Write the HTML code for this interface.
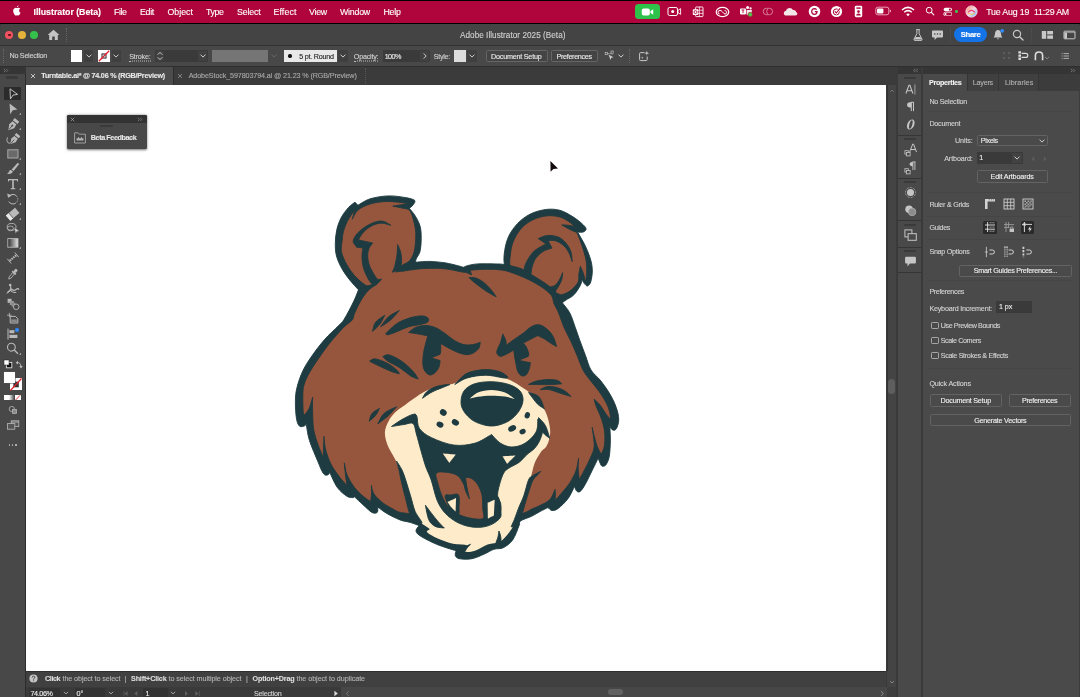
<!DOCTYPE html>
<html lang="en"><head><meta charset="utf-8"><title>Adobe Illustrator 2025 (Beta)</title>
<style>
html,body{margin:0;padding:0;background:#3a3a3a;}
body{width:1080px;height:697px;overflow:hidden;position:relative;font-family:"Liberation Sans",sans-serif;}
#r{position:absolute;left:0;top:0;width:1080px;height:697px;overflow:hidden;will-change:transform;}
#r div,#r svg,#r span{position:absolute;display:block;}
#r span{white-space:nowrap;line-height:1;transform:translateY(-50%);-webkit-text-stroke:0.12px currentColor;}
</style></head><body><div id="r">
<div style="left:0px;top:0px;width:1080px;height:24px;background:#000;"></div>
<div style="left:0px;top:1px;width:1080px;height:22px;background:#b0043c;"></div>
<div style="left:0px;top:23.7px;width:1080px;height:674px;background:#3a3a3a;border-radius:2.5px 2.5px 0 0;"></div>
<div style="left:0px;top:23.7px;width:1080px;height:21.3px;background:#444444;border-radius:2.5px 2.5px 0 0;"></div>
<div style="left:0px;top:45px;width:1080px;height:0.8px;background:#333;"></div>
<div style="left:0px;top:45.8px;width:1080px;height:20.4px;background:#484848;"></div>
<div style="left:0px;top:66.2px;width:1080px;height:0.8px;background:#2f2f2f;"></div>
<div style="left:0px;top:67px;width:1080px;height:17.5px;background:#3b3b3b;"></div>
<div style="left:5.4px;top:31.1px;width:7.8px;height:7.8px;background:#f0525f;border-radius:50%;"></div>
<div style="left:7.9px;top:33.6px;width:2.8px;height:2.8px;background:#5a1218;border-radius:50%;"></div>
<div style="left:17.9px;top:31.1px;width:7.8px;height:7.8px;background:#e5b23a;border-radius:50%;"></div>
<div style="left:30.4px;top:31.1px;width:7.8px;height:7.8px;background:#35c14b;border-radius:50%;"></div>
<svg style="left:47px;top:29px" width="13" height="12" viewBox="0 0 13 12"><path d="M6.5 0.8 L0.6 6 H2.2 V11 H5.2 V7.6 H7.8 V11 H10.8 V6 H12.4 Z" fill="#c4c4c4"/></svg>
<div style="left:66px;top:28px;width:0.6px;height:14px;background:transparent;border-left:0.6px dotted #666;"></div>
<div style="left:2.5px;top:49px;width:0.6px;height:14px;background:transparent;border-left:0.6px dotted #6a6a6a;"></div>
<div style="left:70.7px;top:50px;width:11.8px;height:11.8px;background:#fff;"></div>
<div style="left:84px;top:50px;width:9.3px;height:11.8px;background:#3f3f3f;border-radius:1px;"></div>
<svg style="left:84.6px;top:52px" width="8" height="8" viewBox="-4 -4 8 8"><path d="M-2.2 -1.1 L0 1.1 L2.2 -1.1" fill="none" stroke="#ddd" stroke-width="0.9" stroke-linecap="round" stroke-linejoin="round"/></svg>
<div style="left:98px;top:50px;width:11.8px;height:11.8px;background:#fff;"></div>
<svg style="left:98px;top:50px" width="12" height="12" viewBox="0 0 12 12"><rect x="4" y="4" width="4" height="4" fill="none" stroke="#333" stroke-width="1.1"/><path d="M0.8 11.2 L11.2 0.8" stroke="#e0202c" stroke-width="1.3"/></svg>
<div style="left:111.5px;top:50px;width:9.3px;height:11.8px;background:#3f3f3f;border-radius:1px;"></div>
<svg style="left:112.1px;top:52px" width="8" height="8" viewBox="-4 -4 8 8"><path d="M-2.2 -1.1 L0 1.1 L2.2 -1.1" fill="none" stroke="#ddd" stroke-width="0.9" stroke-linecap="round" stroke-linejoin="round"/></svg>
<div style="left:154.7px;top:49.7px;width:10.6px;height:12px;background:#414141;border:0.5px solid #3a3a3a;box-sizing:border-box;border-radius:1px;"></div>
<svg style="left:155px;top:50px" width="10" height="12" viewBox="0 0 10 12"><path d="M3 4.4 L5 2.4 L7 4.4 M3 7.6 L5 9.6 L7 7.6" fill="none" stroke="#ddd" stroke-width="0.9" stroke-linecap="round" stroke-linejoin="round"/></svg>
<div style="left:165.3px;top:49.7px;width:31.7px;height:12px;background:#3a3a3a;"></div>
<div style="left:197.4px;top:49.7px;width:10.8px;height:12px;background:#414141;border:0.5px solid #3a3a3a;box-sizing:border-box;border-radius:1px;"></div>
<svg style="left:198.6px;top:52px" width="8" height="8" viewBox="-4 -4 8 8"><path d="M-2.2 -1.1 L0 1.1 L2.2 -1.1" fill="none" stroke="#ddd" stroke-width="0.9" stroke-linecap="round" stroke-linejoin="round"/></svg>
<div style="left:212px;top:49.5px;width:56.3px;height:12.5px;background:#757575;"></div>
<svg style="left:270px;top:52px" width="8" height="8" viewBox="-4 -4 8 8"><path d="M-2.2 -1.1 L0 1.1 L2.2 -1.1" fill="none" stroke="#6a6a6a" stroke-width="0.9" stroke-linecap="round" stroke-linejoin="round"/></svg>
<div style="left:283.7px;top:50px;width:53.8px;height:11.8px;background:#e8e8e8;"></div>
<div style="left:288.3px;top:54.3px;width:3.4px;height:3.4px;background:#111;border-radius:50%;"></div>
<div style="left:338px;top:50px;width:10.3px;height:11.8px;background:#3f3f3f;border-radius:1px;"></div>
<svg style="left:339.2px;top:52px" width="8" height="8" viewBox="-4 -4 8 8"><path d="M-2.2 -1.1 L0 1.1 L2.2 -1.1" fill="none" stroke="#ddd" stroke-width="0.9" stroke-linecap="round" stroke-linejoin="round"/></svg>
<div style="left:383px;top:49.7px;width:35.8px;height:12px;background:#3a3a3a;"></div>
<div style="left:419.2px;top:49.7px;width:10.8px;height:12px;background:#414141;border:0.5px solid #3a3a3a;box-sizing:border-box;border-radius:1px;"></div>
<svg style="left:420.5px;top:52px" width="8" height="8" viewBox="-4 -4 8 8"><path d="M-1 -2.2 L1.2 0 L-1 2.2" fill="none" stroke="#ddd" stroke-width="0.9" stroke-linecap="round" stroke-linejoin="round"/></svg>
<div style="left:454.3px;top:50px;width:11.5px;height:11.8px;background:#dcdcdc;"></div>
<div style="left:466.5px;top:50px;width:10px;height:11.8px;background:#3f3f3f;border-radius:1px;"></div>
<svg style="left:467.7px;top:52px" width="8" height="8" viewBox="-4 -4 8 8"><path d="M-2.2 -1.1 L0 1.1 L2.2 -1.1" fill="none" stroke="#ddd" stroke-width="0.9" stroke-linecap="round" stroke-linejoin="round"/></svg>
<div style="left:485.5px;top:50.3px;width:62px;height:11.6px;background:#444;border:0.6px solid #656565;border-radius:1.5px;box-sizing:border-box;"></div>
<div style="left:550.8px;top:50.3px;width:47.2px;height:11.6px;background:#444;border:0.6px solid #656565;border-radius:1.5px;box-sizing:border-box;"></div>
<svg style="left:604px;top:50px" width="12" height="12" viewBox="0 0 12 12"><rect x="1.2" y="2.5" width="2.2" height="2.2" fill="none" stroke="#bbb" stroke-width="0.7"/><rect x="7" y="1" width="2.2" height="2.2" fill="none" stroke="#bbb" stroke-width="0.7"/><path d="M3.4 3.6 H7 M8.1 3.2 V5" stroke="#bbb" stroke-width="0.6"/><path d="M4.5 4.5 L9.5 7.2 L7.3 7.8 L6.5 10 Z" fill="#ccc"/></svg>
<svg style="left:616.8px;top:52px" width="8" height="8" viewBox="-4 -4 8 8"><path d="M-2.2 -1.1 L0 1.1 L2.2 -1.1" fill="none" stroke="#ddd" stroke-width="0.9" stroke-linecap="round" stroke-linejoin="round"/></svg>
<div style="left:629.3px;top:49px;width:0.6px;height:14px;background:transparent;border-left:0.6px dotted #666;"></div>
<svg style="left:637px;top:49.5px" width="13" height="13" viewBox="0 0 13 13"><path d="M7.5 2.6 H3.6 Q2.6 2.6 2.6 3.6 V9.6 Q2.6 10.6 3.6 10.6 H9.2 Q10.2 10.6 10.2 9.6 V6.6" fill="none" stroke="#c8c8c8" stroke-width="1"/><path d="M9.8 0.8 L10.4 2.6 L12.2 3.2 L10.4 3.8 L9.8 5.6 L9.2 3.8 L7.4 3.2 L9.2 2.6 Z" fill="#c8c8c8"/><path d="M5.2 6.6 l0.35 0.9 l0.9 0.35 l-0.9 0.35 l-0.35 0.9 l-0.35 -0.9 l-0.9 -0.35 l0.9 -0.35 Z" fill="#c8c8c8"/></svg>
<svg style="left:1002px;top:51px" width="10" height="10" viewBox="0 0 10 10"><g fill="#5c5c5c"><rect x="1" y="1" width="2.2" height="2.2"/><rect x="6" y="1" width="2.2" height="2.2"/><rect x="1" y="6" width="2.2" height="2.2"/><rect x="6" y="6" width="2.2" height="2.2"/></g></svg>
<svg style="left:1017px;top:50px" width="13" height="12" viewBox="0 0 13 12"><path d="M2.7 1.2 V10.8" stroke="#ddd" stroke-width="2.6" stroke-dasharray="2.4 0.8"/><path d="M4.6 3.4 H8.8 Q10.8 3.4 10.8 5.4 Q10.8 7.4 8.8 7.4 H4.6" fill="none" stroke="#ddd" stroke-width="1.1"/></svg>
<svg style="left:1033px;top:50px" width="12" height="12" viewBox="0 0 12 12"><path d="M2.4 10.2 V5.6 Q2.4 2 6 2 Q9.6 2 9.6 5.6 V10.2" fill="none" stroke="#ddd" stroke-width="1.6"/></svg>
<svg style="left:1042.5px;top:53.5px" width="8" height="8" viewBox="-4 -4 8 8"><path d="M-1.7 -0.85 L0 0.85 L1.7 -0.85" fill="none" stroke="#aaa" stroke-width="0.7" stroke-linecap="round" stroke-linejoin="round"/></svg>
<svg style="left:1061px;top:52px" width="8.8" height="8" viewBox="0 0 11 10"><g stroke="#c8c8c8" stroke-width="1"><path d="M3.2 2 H10 M3.2 5 H10 M3.2 8 H10"/><path d="M0.8 2 H2 M0.8 5 H2 M0.8 8 H2"/></g></svg>
<svg style="left:911px;top:28px" width="14" height="14" viewBox="0 0 14 14"><path d="M5.2 1.6 H8.8 M5.9 1.6 V5.6 L3 11.2 Q2.6 12.4 3.8 12.4 H10.2 Q11.4 12.4 11 11.2 L8.1 5.6 V1.6" fill="none" stroke="#c8c8c8" stroke-width="1"/><path d="M4.6 9 H9.4 L10.6 11.6 H3.4 Z" fill="#c8c8c8"/></svg>
<svg style="left:931px;top:28.5px" width="13" height="13" viewBox="0 0 13 13"><path d="M1.8 1.6 H11.2 Q12 1.6 12 2.4 V7.6 Q12 8.4 11.2 8.4 H6 L3.6 11 V8.4 H1.8 Q1 8.4 1 7.6 V2.4 Q1 1.6 1.8 1.6 Z" fill="#c8c8c8"/><g fill="#444"><circle cx="3.8" cy="5" r="0.8"/><circle cx="6.5" cy="5" r="0.8"/><circle cx="9.2" cy="5" r="0.8"/></g></svg>
<div style="left:950.3px;top:28px;width:0.6px;height:14px;background:transparent;border-left:0.6px dotted #525252;"></div>
<div style="left:954.4px;top:26.7px;width:32.8px;height:15.5px;background:#1473e6;border-radius:8px;"></div>
<svg style="left:991px;top:28px" width="14" height="14" viewBox="0 0 14 14"><path d="M7 2 Q4.2 2.4 4 5.6 Q3.9 8.2 2.6 9.6 H11.4 Q10.1 8.2 10 5.6 Q9.8 2.4 7 2 Z" fill="#c8c8c8"/><path d="M5.8 10.4 Q7 12.2 8.2 10.4 Z" fill="#c8c8c8"/><circle cx="11.2" cy="2.8" r="1.9" fill="#2f8bff"/></svg>
<svg style="left:1011px;top:28px" width="14" height="14" viewBox="0 0 14 14"><circle cx="6" cy="6" r="3.6" fill="none" stroke="#c8c8c8" stroke-width="1.2"/><path d="M8.7 8.7 L12 12" stroke="#c8c8c8" stroke-width="1.4" stroke-linecap="round"/></svg>
<div style="left:1030.6px;top:28px;width:0.6px;height:14px;background:transparent;border-left:0.6px dotted #525252;"></div>
<svg style="left:1041px;top:29.5px" width="13" height="10" viewBox="0 0 13 10"><g fill="#c8c8c8"><rect x="0.8" y="1" width="4.4" height="7.8"/><rect x="6.2" y="1" width="5.8" height="3.4"/><rect x="6.2" y="5.4" width="5.8" height="3.4"/></g></svg>
<svg style="left:1062.5px;top:29.5px" width="13" height="10" viewBox="0 0 13 10"><rect x="1" y="1.2" width="11" height="7.6" rx="0.6" fill="none" stroke="#c8c8c8" stroke-width="1"/><rect x="1.4" y="2.6" width="2.6" height="6" fill="#c8c8c8"/><path d="M1 2.6 H12" stroke="#c8c8c8" stroke-width="0.6"/></svg>
<svg style="left:12.3px;top:5.1px" width="9.4" height="11.1" viewBox="0 0 11 13"><path d="M7.4 3.1 Q8.6 3 9.6 4.2 Q8.2 5.2 8.3 6.7 Q8.4 8.4 10 9.1 Q9.5 10.6 8.5 11.8 Q7.8 12.6 7 12.3 Q6 11.8 5.2 12.2 Q4.2 12.7 3.5 12 Q1.2 9.6 1.3 6.8 Q1.5 3.6 4.2 3.3 Q5.3 3.5 5.9 3.6 Q6.5 3.4 7.4 3.1 Z M5.6 3 Q5.5 1.2 7.6 0.4 Q7.8 2.3 5.6 3 Z" fill="#fff"/></svg>
<div style="left:635px;top:3.8px;width:25px;height:15px;background:#2fc24b;border-radius:3.5px;"></div>
<svg style="left:641px;top:6.5px" width="13" height="10" viewBox="0 0 13 10"><rect x="0.8" y="1.4" width="8" height="7.2" rx="1.8" fill="#fff"/><path d="M9.4 4.2 L12.2 2.2 V7.8 L9.4 5.8 Z" fill="#fff"/></svg>
<svg style="left:667px;top:6px" width="15" height="11" viewBox="0 0 15 11"><rect x="1" y="1.5" width="9.5" height="8" rx="1.6" fill="none" stroke="#fff" stroke-width="1"/><circle cx="5.7" cy="5.5" r="1.5" fill="#fff"/><path d="M11 4.4 L13.6 2.6 V8.4 L11 6.6 Z" fill="none" stroke="#fff" stroke-width="0.9"/></svg>
<svg style="left:692px;top:5.5px" width="12" height="12" viewBox="0 0 12 12"><rect x="3.6" y="1" width="7.4" height="9.6" rx="0.8" fill="none" stroke="#fff" stroke-width="0.9"/><path d="M3.6 4.2 H11 M7.4 1 V10.6 M3.6 7.4 H11" stroke="#fff" stroke-width="0.7"/><rect x="0.8" y="3.2" width="5.4" height="5.8" rx="0.8" fill="#fff"/><circle cx="3.5" cy="6.1" r="1.5" fill="none" stroke="#b0043c" stroke-width="0.9"/></svg>
<svg style="left:714.5px;top:5.5px" width="15" height="12" viewBox="0 0 15 12"><ellipse cx="7.5" cy="6" rx="6.3" ry="4.7" fill="none" stroke="#fff" stroke-width="1.2"/><path d="M4.6 8 Q3 7.8 3 6.2 Q3.2 4.4 5 4.4 Q6.2 4.4 7.2 5.6 L9 7.6 Q10 8.4 11 7.8 Q12 7 11.6 5.8 Q11 4.4 9.6 4.6" fill="none" stroke="#fff" stroke-width="1"/></svg>
<svg style="left:739px;top:5px" width="14" height="13" viewBox="0 0 14 13"><rect x="1" y="3.4" width="6" height="6" rx="0.8" fill="#fff"/><path d="M2.6 5 H5.4 M4 5 V8.2" stroke="#b0043c" stroke-width="0.9"/><circle cx="8.6" cy="2.6" r="1.5" fill="#fff"/><circle cx="11.6" cy="3.4" r="1.1" fill="#fff"/><path d="M7.6 5 H12.8 V8 Q12.6 10.4 10 10.4 Q8.4 10.4 7.6 9.4 Z" fill="#fff" opacity="0.9"/><circle cx="11.2" cy="9.6" r="2.3" fill="#4fc34a" stroke="#b0043c" stroke-width="0.6"/></svg>
<svg style="left:761.5px;top:7px" width="12" height="9" viewBox="0 0 12 9"><rect x="1.2" y="1.3" width="9.4" height="6.4" rx="3.2" fill="none" stroke="#dc8aa2" stroke-width="0.9"/><path d="M5.6 2 Q3.6 4.5 5.6 7" fill="none" stroke="#dc8aa2" stroke-width="0.9"/></svg>
<svg style="left:783px;top:6px" width="15" height="11" viewBox="0 0 15 11"><path d="M3.6 9.6 Q0.8 9.6 0.8 7.2 Q0.8 5.2 3 4.8 Q3.8 2 6.8 2 Q9 2 10 4 Q11.2 3.6 12.4 4.6 Q13 5.2 13 6 Q14.4 6.4 14.4 7.8 Q14.4 9.6 12.4 9.6 Z" fill="#f3e6ea"/></svg>
<svg style="left:808px;top:5px" width="13" height="13" viewBox="0 0 13 13"><circle cx="6.5" cy="6.5" r="5.8" fill="#fff"/><path d="M8.6 4.6 Q7.8 3.6 6.4 3.6 Q3.8 3.7 3.7 6.5 Q3.8 9.3 6.4 9.4 Q8.8 9.3 9 6.7 H6.8" fill="none" stroke="#b0043c" stroke-width="1.2"/></svg>
<svg style="left:830px;top:5px" width="13" height="13" viewBox="0 0 13 13"><circle cx="6.5" cy="6.5" r="5.6" fill="#fff"/><circle cx="6.3" cy="6.9" r="3" fill="none" stroke="#b0043c" stroke-width="1"/><path d="M4.8 6.4 L6.3 8 L10.2 3.2" fill="none" stroke="#fff" stroke-width="2.4"/><path d="M4.8 6.4 L6.3 8 L10 3.4" fill="none" stroke="#b0043c" stroke-width="1.1"/></svg>
<svg style="left:853.5px;top:5px" width="9" height="13" viewBox="0 0 9 13"><rect x="0.8" y="0.8" width="7.4" height="11.4" rx="1.4" fill="#fff"/><rect x="2.4" y="2.4" width="4.2" height="1.4" fill="#b0043c"/><circle cx="4.5" cy="6.6" r="1.3" fill="#b0043c"/><path d="M2.2 10.4 Q2.2 8.4 4.5 8.4 Q6.8 8.4 6.8 10.4 Z" fill="#b0043c"/></svg>
<svg style="left:875px;top:6px" width="17" height="10" viewBox="0 0 17 10"><rect x="0.8" y="1.2" width="13" height="7.6" rx="2" fill="none" stroke="#efb3c4" stroke-width="0.9"/><rect x="2" y="2.4" width="6.4" height="5.2" rx="1" fill="#fff"/><path d="M14.8 3.6 Q16 3.8 16 5 Q16 6.2 14.8 6.4 Z" fill="#efb3c4"/></svg>
<svg style="left:901px;top:5.5px" width="14" height="11" viewBox="0 0 14 11"><g fill="none" stroke="#fff" stroke-width="1.5" stroke-linecap="butt"><path d="M1 4 Q7 -1.2 13 4"/><path d="M3.2 6.3 Q7 3 10.8 6.3"/></g><path d="M5.2 8.3 Q7 6.8 8.8 8.3 L7 10.2 Z" fill="#fff"/></svg>
<svg style="left:924.5px;top:6.2px" width="10" height="10" viewBox="0 0 10 10"><circle cx="4.2" cy="4.2" r="2.9" fill="none" stroke="#fff" stroke-width="1"/><path d="M6.4 6.4 L8.8 8.8" stroke="#fff" stroke-width="1.1" stroke-linecap="round"/></svg>
<svg style="left:942.6px;top:6.6px" width="9.6" height="9.6" viewBox="0 0 12 12"><rect x="0.8" y="1" width="10.4" height="4.4" rx="2.2" fill="#fff"/><circle cx="8.6" cy="3.2" r="1.4" fill="#b0043c"/><rect x="0.8" y="6.6" width="10.4" height="4.4" rx="2.2" fill="none" stroke="#fff" stroke-width="0.9"/><circle cx="3.2" cy="8.8" r="1.3" fill="#fff"/></svg>
<div style="left:955.1px;top:9.9px;width:2.8px;height:2.8px;background:#35d052;border-radius:50%;"></div>
<svg style="left:964.5px;top:5px" width="13" height="13" viewBox="0 0 13 13"><defs><linearGradient id="sg" x1="0" y1="0" x2="1" y2="1"><stop offset="0" stop-color="#ff8a5c"/><stop offset="0.5" stop-color="#f4d9e6"/><stop offset="1" stop-color="#59b7ff"/></linearGradient></defs><circle cx="6.5" cy="6.5" r="5.6" fill="url(#sg)" stroke="#f4e3e8" stroke-width="0.9"/><path d="M3 7.4 Q6.5 3.4 10 7.4" fill="none" stroke="#e8467a" stroke-width="1.1"/><path d="M3.4 8.4 Q6.5 10.6 9.6 8.4" fill="none" stroke="#f8c24a" stroke-width="1"/></svg>
<div style="left:25.8px;top:67px;width:147.5px;height:17.5px;background:#4c4c4c;"></div>
<div style="left:173.3px;top:67px;width:0.7px;height:17.5px;background:#2e2e2e;"></div>
<div style="left:364.5px;top:68px;width:0.6px;height:16px;background:transparent;border-left:0.6px dotted #555;"></div>
<svg style="left:30.3px;top:72.6px" width="6" height="6" viewBox="0 0 6 6"><path d="M1 1 L5 5 M5 1 L1 5" stroke="#e0e0e0" stroke-width="0.8"/></svg>
<svg style="left:177.3px;top:72.6px" width="6" height="6" viewBox="0 0 6 6"><path d="M1 1 L5 5 M5 1 L1 5" stroke="#a0a0a0" stroke-width="0.7"/></svg>
<div style="left:25.8px;top:84.5px;width:860.7px;height:586.7px;background:#fff;"></div>
<div style="left:0px;top:66.8px;width:25.8px;height:7px;background:#353535;"></div>
<div style="left:0px;top:73.8px;width:25.2px;height:623.2px;background:#484848;"></div>
<div style="left:25.2px;top:73.8px;width:0.7px;height:623.2px;background:#2c2c2c;"></div>
<svg style="left:3px;top:67.5px" width="6" height="5" viewBox="0 0 6 5"><path d="M0.8 0.8 L2.4 2.5 L0.8 4.2 M3.2 0.8 L4.8 2.5 L3.2 4.2" fill="none" stroke="#9a9a9a" stroke-width="0.6"/></svg>
<div style="left:6.3px;top:76.2px;width:12px;height:2.4px;background:#3a3a3a;border-radius:1px;"></div>
<div style="left:4.2px;top:87px;width:16.6px;height:13.4px;background:#2b2b2b;border-radius:1px;"></div>
<svg style="left:4.5px;top:86px" width="16" height="16" viewBox="-8 -8 16 16"><path d="M-3 -5.2 L4.6 0.4 L0 1.1 L-2.6 5 Z" fill="none" stroke="#c0c0c0" stroke-width="1" stroke-linejoin="miter"/></svg>
<svg style="left:4.5px;top:101.3px" width="16" height="16" viewBox="-8 -8 16 16"><path d="M-3.4 -5.6 L4.4 0.6 L-0.2 1.2 L-2.8 5.2 Z" fill="#bababa"/><path d="M8.3 3.5 V5.7 H6.1 Z" fill="#b8b8b8"/></svg>
<svg style="left:4.5px;top:116.2px" width="16" height="16" viewBox="-8 -8 16 16"><g transform="translate(0.4 0.2) rotate(40) scale(1.22)"><path d="M-2 -1.4 H2 L2.6 2.2 L0 6.4 L-2.6 2.2 Z" fill="#bababa"/><rect x="-2.4" y="-4.6" width="4.8" height="2.4" fill="#bababa"/><path d="M0 1 V5.4" stroke="#484848" stroke-width="0.7"/><circle cx="0" cy="1.4" r="0.8" fill="#484848"/></g><path d="M8.3 3.5 V5.7 H6.1 Z" fill="#b8b8b8"/></svg>
<svg style="left:4.5px;top:130.8px" width="16" height="16" viewBox="-8 -8 16 16"><g transform="translate(2 -0.4) rotate(40) scale(1.18)"><path d="M-1.9 -1.4 H1.9 L2.4 2 L0 6 L-2.4 2 Z" fill="#bababa"/><rect x="-2.2" y="-4.4" width="4.4" height="2.3" fill="#bababa"/><path d="M0 1 V5" stroke="#484848" stroke-width="0.7"/></g><path d="M-5.6 -1.6 Q-7 1.6 -5.2 3.6 Q-3.6 5.2 -2.4 3.2" fill="none" stroke="#bababa" stroke-width="0.9"/></svg>
<svg style="left:4.5px;top:145.6px" width="16" height="16" viewBox="-8 -8 16 16"><rect x="-5.2" y="-4.2" width="10.2" height="8.2" fill="#6a6a6a" stroke="#a8a8a8" stroke-width="1"/><path d="M8.3 3.5 V5.7 H6.1 Z" fill="#b8b8b8"/></svg>
<svg style="left:4.5px;top:160.6px" width="16" height="16" viewBox="-8 -8 16 16"><path d="M4.8 -6.2 L6.2 -5 L0.6 2 L-1.4 0.4 Z" fill="#bababa"/><path d="M-2 1 L0 2.8 Q-1.4 5.6 -6 5 Q-4.2 3.8 -4 2.4 Q-3.4 0.8 -2 1 Z" fill="#bababa"/><path d="M8.3 3.5 V5.7 H6.1 Z" fill="#b8b8b8"/></svg>
<svg style="left:4.5px;top:175.7px" width="16" height="16" viewBox="-8 -8 16 16"><path d="M-5 -5 H5 V-2.6 H4.2 L3.8 -3.8 H0.8 V4 L2.4 4.4 V5.2 H-2.4 V4.4 L-0.8 4 V-3.8 H-3.8 L-4.2 -2.6 H-5 Z" fill="#bababa"/><path d="M8.3 3.5 V5.7 H6.1 Z" fill="#b8b8b8"/></svg>
<svg style="left:4.5px;top:190.6px" width="16" height="16" viewBox="-8 -8 16 16"><path d="M-3.6 -3 A4.8 4.8 0 1 1 -4.2 2.6" fill="none" stroke="#bababa" stroke-width="1" stroke-dasharray="9 1.2 1.2 1.2 1.2 1.2 20"/><path d="M-5.8 -5.6 L-5 -1.2 L-1.2 -3.4 Z" fill="#bababa"/><path d="M8.3 3.5 V5.7 H6.1 Z" fill="#b8b8b8"/></svg>
<svg style="left:4.5px;top:205.8px" width="16" height="16" viewBox="-8 -8 16 16"><g transform="rotate(-40) scale(1.15)"><rect x="-5.6" y="-3" width="10.4" height="6" fill="#bababa"/><rect x="-5.6" y="-3" width="3.4" height="6" fill="#e8e8e8"/><path d="M-2.2 -3 V3" stroke="#484848" stroke-width="0.6"/></g><path d="M8.3 3.5 V5.7 H6.1 Z" fill="#b8b8b8"/></svg>
<svg style="left:4.5px;top:220.3px" width="16" height="16" viewBox="-8 -8 16 16"><ellipse cx="-1.4" cy="-1.2" rx="4.4" ry="3.4" fill="none" stroke="#bababa" stroke-width="0.9"/><ellipse cx="-2.6" cy="0.4" rx="3" ry="2.4" fill="none" stroke="#bababa" stroke-width="0.8"/><path d="M1.4 -0.4 L6.4 3 L3.8 3.4 L2.6 5.8 Z" fill="#d8d8d8" stroke="#484848" stroke-width="0.4"/></svg>
<svg style="left:4.5px;top:235.2px" width="16" height="16" viewBox="-8 -8 16 16"><defs><linearGradient id="gg" x1="0" y1="0" x2="1" y2="0"><stop offset="0" stop-color="#2a2a2a"/><stop offset="1" stop-color="#e6e6e6"/></linearGradient></defs><rect x="-5.2" y="-4.4" width="10.2" height="8.6" fill="url(#gg)" stroke="#bababa" stroke-width="0.9"/><path d="M8.3 3.5 V5.7 H6.1 Z" fill="#b8b8b8"/></svg>
<svg style="left:4.5px;top:250.3px" width="16" height="16" viewBox="-8 -8 16 16"><g transform="rotate(-40)"><path d="M-4.2 0 H4.2" stroke="#bababa" stroke-width="2.2" stroke-dasharray="1.5 0.8"/><path d="M-4.9 -3 V3 M4.9 -3 V3" stroke="#bababa" stroke-width="0.9"/></g></svg>
<svg style="left:4.5px;top:265.6px" width="16" height="16" viewBox="-8 -8 16 16"><g transform="rotate(40)"><path d="M-1.1 -1 H1.1 V4.6 L0 6.6 L-1.1 4.6 Z" fill="none" stroke="#bababa" stroke-width="0.8"/><rect x="-2.4" y="-2.4" width="4.8" height="1.6" fill="#bababa"/><rect x="-1.5" y="-6" width="3" height="3.8" rx="1.2" fill="#bababa"/></g></svg>
<svg style="left:4.5px;top:280.6px" width="16" height="16" viewBox="-8 -8 16 16"><path d="M-5.6 3.6 Q-3 2.2 -2.2 -0.6 Q-1.8 -3 -3.6 -4.4 M-2.2 -0.6 Q0.4 2.6 3 0.6 Q5 -1.2 6 0.6 M-2.6 1 Q-0.4 4.4 3.2 3.2" fill="none" stroke="#bababa" stroke-width="1.2"/><circle cx="-2.8" cy="-4" r="1.3" fill="#bababa"/><path d="M-6.4 4.4 L-2.2 1.4" stroke="#bababa" stroke-width="0.9"/></svg>
<svg style="left:4.5px;top:295.6px" width="16" height="16" viewBox="-8 -8 16 16"><path d="M-5.4 -5.2 H-1.4 V-1.2 H-5.4 Z" fill="#bababa"/><path d="M-3.2 -3 H0.8 V1 H-3.2 Z" fill="#9a9a9a"/><circle cx="0.4" cy="0.6" r="2.4" fill="#8a8a8a"/><circle cx="3.2" cy="2.8" r="2.8" fill="#484848" stroke="#bababa" stroke-width="0.9"/></svg>
<svg style="left:4.5px;top:310.6px" width="16" height="16" viewBox="-8 -8 16 16"><path d="M-3.6 -6.2 V-1.8 M-6 -3.8 H-1.4" stroke="#bababa" stroke-width="0.8"/><path d="M-2.8 -2.6 H2.4 L4.8 -0.4 V4 H-2.8 Z" fill="none" stroke="#bababa" stroke-width="1"/><path d="M-1.8 0.4 H3.8 V3 H-1.8 Z" fill="#8a8a8a"/></svg>
<svg style="left:4.5px;top:325.6px" width="16" height="16" viewBox="-8 -8 16 16"><path d="M-5 -5.4 V5.6" stroke="#bababa" stroke-width="1"/><rect x="-3.6" y="-3.8" width="5" height="3" fill="#bababa"/><rect x="-3.6" y="0.8" width="8" height="3.2" fill="#bababa"/></svg>
<div style="left:14.8px;top:327.6px;width:4.6px;height:4.6px;background:#2f8bff;border-radius:50%;"></div>
<svg style="left:4.5px;top:340.8px" width="16" height="16" viewBox="-8 -8 16 16"><circle cx="-1.6" cy="-1.8" r="3.9" fill="none" stroke="#bababa" stroke-width="1.1"/><path d="M1.2 1 L5 4.8" stroke="#bababa" stroke-width="1.3"/><path d="M8.3 3.5 V5.7 H6.1 Z" fill="#b8b8b8"/></svg>
<svg style="left:2.6px;top:359.4px" width="10" height="10" viewBox="0 0 10 10"><rect x="3.4" y="3.4" width="5.4" height="5.4" fill="#111" stroke="#ddd" stroke-width="0.9"/><rect x="1" y="1" width="5" height="5" fill="#fff" stroke="#222" stroke-width="0.5"/></svg>
<svg style="left:15px;top:360px" width="9" height="9" viewBox="0 0 9 9"><path d="M2 2.6 Q5.6 2.2 6 6.6" fill="none" stroke="#bababa" stroke-width="1"/><path d="M0.6 2.8 L3 0.8 V4.6 Z M4.2 6 H7.8 L6 8.4 Z" fill="#bababa"/></svg>
<div style="left:10px;top:378px;width:11.5px;height:12.2px;background:#fff;"></div>
<svg style="left:10px;top:378px" width="12" height="13" viewBox="0 0 11.5 12.2"><rect x="3.2" y="3.4" width="5.2" height="5.4" fill="#333"/><path d="M0.4 11.8 L11.1 0.4" stroke="#e0202c" stroke-width="1.2"/></svg>
<div style="left:3.8px;top:372px;width:11.4px;height:11.3px;background:#fff;box-shadow:0 0 0 0.5px #555;"></div>
<div style="left:4.3px;top:394.5px;width:4.6px;height:5.6px;background:#fff;"></div>
<div style="left:9.4px;top:394.5px;width:4.4px;height:5.6px;background:linear-gradient(90deg,#fff,#555);"></div>
<div style="left:15.4px;top:394.5px;width:5.4px;height:5.6px;background:#fff;"></div>
<svg style="left:15.4px;top:394.5px" width="5.4" height="5.6" viewBox="0 0 5.4 5.6"><path d="M0.2 5.4 L5.2 0.2" stroke="#e0202c" stroke-width="0.9"/></svg>
<svg style="left:4.5px;top:401.6px" width="16" height="16" viewBox="-8 -8 16 16"><circle cx="-1.2" cy="-1" r="2.6" fill="none" stroke="#bababa" stroke-width="0.8"/><rect x="-0.6" y="-0.4" width="4.2" height="3.8" fill="#8a8a8a" stroke="#bababa" stroke-width="0.7"/></svg>
<svg style="left:4.5px;top:416.6px" width="16" height="16" viewBox="-8 -8 16 16"><rect x="-1.8" y="-4.2" width="7.6" height="5.8" fill="#555" stroke="#bababa" stroke-width="0.8"/><path d="M-1.8 -3 H5.8" stroke="#bababa" stroke-width="0.9"/><rect x="-5.6" y="-1.4" width="7.4" height="5.6" fill="#555" stroke="#bababa" stroke-width="0.8"/></svg>
<div style="left:8.6px;top:444px;width:1.7px;height:1.7px;background:#bababa;border-radius:50%;"></div>
<div style="left:11.799999999999999px;top:444px;width:1.7px;height:1.7px;background:#bababa;border-radius:50%;"></div>
<div style="left:15.0px;top:444px;width:1.7px;height:1.7px;background:#bababa;border-radius:50%;"></div>
<div style="left:67px;top:114.5px;width:80px;height:34.2px;background:#484848;border-radius:1.5px;box-shadow:0 0.5px 2.5px rgba(0,0,0,0.55);"></div>
<div style="left:67px;top:114.5px;width:80px;height:8.3px;background:#333;border-radius:1.5px 1.5px 0 0;"></div>
<svg style="left:70px;top:116.7px" width="5" height="5" viewBox="0 0 5 5"><path d="M0.7 0.7 L4.3 4.3 M4.3 0.7 L0.7 4.3" stroke="#bbb" stroke-width="0.6"/></svg>
<svg style="left:136.5px;top:116.7px" width="6" height="5" viewBox="0 0 6 5"><path d="M0.8 0.8 L2.4 2.5 L0.8 4.2 M3.2 0.8 L4.8 2.5 L3.2 4.2" fill="none" stroke="#9a9a9a" stroke-width="0.6"/></svg>
<div style="left:100px;top:125px;width:12.8px;height:2.4px;background:#3a3a3a;border-radius:1px;"></div>
<svg style="left:73.5px;top:131.6px" width="12" height="12" viewBox="0 0 12 12"><path d="M0.6 0.8 H4.2 L5.2 2.2 H11.4 V11 H0.6 Z" fill="none" stroke="#b4b4b4" stroke-width="0.8"/><path d="M2.6 8.6 V6.2 H4.2 V5 H5 V6.2 H7 V5 H7.8 V6.2 H9.4 V8.6 Z" fill="#b4b4b4"/></svg>
<div style="left:886.5px;top:84.5px;width:9.6px;height:586.7px;background:#444;"></div>
<div style="left:886.5px;top:84.5px;width:1.5px;height:602.5px;background:#343434;"></div>
<svg style="left:887.5px;top:86.5px" width="8" height="8" viewBox="-4 -4 8 8"><path d="M-1.8 0.8 L0 -1 L1.8 0.8" fill="none" stroke="#888" stroke-width="0.7"/></svg>
<div style="left:887.8px;top:379px;width:7.2px;height:14.8px;background:#5e5e5e;border-radius:3.6px;"></div>
<div style="left:886.5px;top:671.2px;width:9.6px;height:15.8px;background:#444;"></div>
<svg style="left:887.5px;top:677.5px" width="8" height="8" viewBox="-4 -4 8 8"><path d="M-1.8 -0.8 L0 1 L1.8 -0.8" fill="none" stroke="#aaa" stroke-width="0.7"/></svg>
<div style="left:898.3px;top:66.8px;width:23.2px;height:7px;background:#353535;"></div>
<svg style="left:912.5px;top:68px" width="6" height="5" viewBox="0 0 6 5"><path d="M2.4 0.8 L0.8 2.5 L2.4 4.2 M4.8 0.8 L3.2 2.5 L4.8 4.2" fill="none" stroke="#9a9a9a" stroke-width="0.6"/></svg>
<div style="left:898.3px;top:73.8px;width:23.2px;height:623.2px;background:#494949;"></div>
<div style="left:898.3px;top:134.6px;width:23.2px;height:0.8px;background:#353535;"></div>
<div style="left:898.3px;top:177.5px;width:23.2px;height:0.8px;background:#353535;"></div>
<div style="left:898.3px;top:220.4px;width:23.2px;height:0.8px;background:#353535;"></div>
<div style="left:898.3px;top:246.5px;width:23.2px;height:0.8px;background:#353535;"></div>
<div style="left:898.3px;top:271.8px;width:23.2px;height:0.8px;background:#353535;"></div>
<div style="left:904px;top:76.8px;width:11.6px;height:2.2px;background:#3a3a3a;border-radius:1px;"></div>
<div style="left:904px;top:137.6px;width:11.6px;height:2.2px;background:#3a3a3a;border-radius:1px;"></div>
<div style="left:904px;top:180.6px;width:11.6px;height:2.2px;background:#3a3a3a;border-radius:1px;"></div>
<div style="left:904px;top:223.6px;width:11.6px;height:2.2px;background:#3a3a3a;border-radius:1px;"></div>
<div style="left:904px;top:249.6px;width:11.6px;height:2.2px;background:#3a3a3a;border-radius:1px;"></div>
<svg style="left:902px;top:80.5px" width="17" height="17" viewBox="-8.5 -8.5 17 17"><path d="M-4.6 4 L-1.6 -4.2 H-0.6 L2.4 4 M-3.4 1.2 H1.2" fill="none" stroke="#c6c6c6" stroke-width="1.05"/><path d="M4.4 -5 V5" stroke="#c6c6c6" stroke-width="0.7"/></svg>
<svg style="left:902px;top:98px" width="17" height="17" viewBox="-8.5 -8.5 17 17"><path d="M0.4 -4.2 H3.6 M0.8 -4.2 V4.6 M3 -4.2 V4.6" stroke="#c6c6c6" stroke-width="1"/><path d="M0.8 -4.2 H-0.6 Q-3.4 -4 -3.4 -1.6 Q-3.4 0.8 -0.6 1 H0.8 Z" fill="#c6c6c6"/></svg>
<svg style="left:902px;top:115.5px" width="17" height="17" viewBox="-8.5 -8.5 17 17"><g transform="skewX(-14)"><path fill-rule="evenodd" fill="#c6c6c6" d="M0.3 -5 C2.4 -5 3.9 -2.8 3.9 0 C3.9 2.8 2.4 5 0.3 5 C-1.8 5 -3.3 2.8 -3.3 0 C-3.3 -2.8 -1.8 -5 0.3 -5 Z M0.3 -4.3 C-0.7 -4.3 -1.2 -2.4 -1.2 0 C-1.2 2.4 -0.7 4.3 0.3 4.3 C1.3 4.3 1.8 2.4 1.8 0 C1.8 -2.4 1.3 -4.3 0.3 -4.3 Z"/></g></svg>
<svg style="left:902px;top:141px" width="17" height="17" viewBox="-8.5 -8.5 17 17"><path d="M-0.8 2.6 L2.2 -5.4 H3 L6 2.6 M0.4 0 H4.8" fill="none" stroke="#c6c6c6" stroke-width="1"/><rect x="-5.6" y="1.2" width="3.4" height="3.4" fill="none" stroke="#c6c6c6" stroke-width="0.8"/><rect x="-4" y="3" width="3.6" height="3.4" fill="#494949" stroke="#c6c6c6" stroke-width="0.8"/></svg>
<svg style="left:902px;top:158.8px" width="17" height="17" viewBox="-8.5 -8.5 17 17"><path d="M2 -5.6 H5 M2.4 -5.6 V2.6 M4.4 -5.6 V2.6" stroke="#c6c6c6" stroke-width="0.9"/><path d="M2.4 -5.6 H1.4 Q-1 -5.4 -1 -3.4 Q-1 -1.4 1.4 -1.2 H2.4 Z" fill="#c6c6c6"/><rect x="-5.6" y="1.2" width="3.4" height="3.4" fill="none" stroke="#c6c6c6" stroke-width="0.8"/><rect x="-4" y="3" width="3.6" height="3.4" fill="#494949" stroke="#c6c6c6" stroke-width="0.8"/></svg>
<svg style="left:902px;top:183.9px" width="17" height="17" viewBox="-8.5 -8.5 17 17"><circle r="3.5" fill="#c6c6c6"/><circle r="5" fill="none" stroke="#c6c6c6" stroke-width="0.9" stroke-dasharray="0.7 0.9"/></svg>
<svg style="left:902px;top:201.6px" width="17" height="17" viewBox="-8.5 -8.5 17 17"><circle cx="-1.4" cy="-1.2" r="3.8" fill="#c6c6c6"/><circle cx="1.6" cy="1.4" r="3.8" fill="#8c8c8c" stroke="#c6c6c6" stroke-width="0.5"/></svg>
<svg style="left:902px;top:226.8px" width="17" height="17" viewBox="-8.5 -8.5 17 17"><rect x="-5.6" y="-5.6" width="7" height="7" fill="none" stroke="#c6c6c6" stroke-width="1"/><rect x="-2.4" y="-1.8" width="8.2" height="6.6" fill="#494949" stroke="#c6c6c6" stroke-width="1"/></svg>
<svg style="left:902px;top:252.8px" width="17" height="17" viewBox="-8.5 -8.5 17 17"><path d="M-4.4 -4.8 H4.4 Q5.4 -4.8 5.4 -3.8 V1 Q5.4 2 4.4 2 H-0.6 L-3 5 V2 H-4.4 Q-5.4 2 -5.4 1 V-3.8 Q-5.4 -4.8 -4.4 -4.8 Z" fill="#c6c6c6"/></svg>
<div style="left:923.3px;top:66.8px;width:156.7px;height:7px;background:#353535;"></div>
<svg style="left:1069.5px;top:68px" width="6" height="5" viewBox="0 0 6 5"><path d="M0.8 0.8 L2.4 2.5 L0.8 4.2 M3.2 0.8 L4.8 2.5 L3.2 4.2" fill="none" stroke="#9a9a9a" stroke-width="0.6"/></svg>
<div style="left:923.3px;top:73.8px;width:156.7px;height:623.2px;background:#4a4a4a;"></div>
<div style="left:1078.7px;top:73.8px;width:1.3px;height:623.2px;background:#3d3d3d;"></div>
<div style="left:923.3px;top:73.8px;width:156.7px;height:17px;background:#3c3c3c;"></div>
<div style="left:923.3px;top:73.8px;width:43.5px;height:17px;background:#4a4a4a;"></div>
<div style="left:966.8px;top:73.8px;width:32px;height:17px;background:#404040;border-left:0.6px solid #353535;border-right:0.6px solid #353535;box-sizing:border-box;"></div>
<div style="left:998.8px;top:73.8px;width:39.8px;height:17px;background:#404040;border-right:0.6px solid #353535;box-sizing:border-box;"></div>
<div style="left:927px;top:111.3px;width:145px;height:0.6px;background:#454545;"></div>
<div style="left:927px;top:192px;width:145px;height:0.6px;background:#454545;"></div>
<div style="left:927px;top:215.7px;width:145px;height:0.6px;background:#454545;"></div>
<div style="left:927px;top:239px;width:145px;height:0.6px;background:#454545;"></div>
<div style="left:927px;top:280.4px;width:145px;height:0.6px;background:#454545;"></div>
<div style="left:927px;top:368.3px;width:145px;height:0.6px;background:#454545;"></div>
<div style="left:976.5px;top:134.6px;width:71.5px;height:11.6px;background:#4a4a4a;border:0.6px solid #636363;border-radius:1.5px;box-sizing:border-box;"></div>
<svg style="left:1038.3px;top:136.6px" width="8" height="8" viewBox="-4 -4 8 8"><path d="M-2.2 -1.1 L0 1.1 L2.2 -1.1" fill="none" stroke="#ddd" stroke-width="0.9" stroke-linecap="round" stroke-linejoin="round"/></svg>
<div style="left:976.5px;top:152.4px;width:34.7px;height:11.7px;background:#3a3a3a;"></div>
<div style="left:1011.4px;top:152.4px;width:11.3px;height:11.7px;background:#424242;border:0.5px solid #3a3a3a;box-sizing:border-box;border-radius:1px;"></div>
<svg style="left:1013px;top:154.4px" width="8" height="8" viewBox="-4 -4 8 8"><path d="M-2.2 -1.1 L0 1.1 L2.2 -1.1" fill="none" stroke="#ddd" stroke-width="0.9" stroke-linecap="round" stroke-linejoin="round"/></svg>
<svg style="left:1029px;top:154.5px" width="20" height="8" viewBox="0 0 20 8"><path d="M5.2 1.6 V6.4 L2.6 4 Z M14.8 1.6 V6.4 L17.4 4 Z" fill="#5e5e5e"/></svg>
<div style="left:976.5px;top:170.4px;width:71.5px;height:12.4px;background:#4a4a4a;border:0.6px solid #636363;border-radius:1.5px;box-sizing:border-box;"></div>
<svg style="left:984px;top:198px" width="12" height="12" viewBox="0 0 12 12"><path d="M1 11 V1 H11 V3.6 H3.6 V11 Z" fill="#d2d2d2"/><path d="M5.4 1 V2.4 M7.4 1 V2.4 M9.4 1 V2.4" stroke="#4a4a4a" stroke-width="0.5"/></svg>
<svg style="left:1002.7px;top:198px" width="12" height="12" viewBox="0 0 12 12"><rect x="1" y="1" width="10" height="10" fill="none" stroke="#d2d2d2" stroke-width="0.9"/><path d="M4.3 1 V11 M7.7 1 V11 M1 4.3 H11 M1 7.7 H11" stroke="#d2d2d2" stroke-width="0.8"/></svg>
<svg style="left:1021.8px;top:198px" width="12" height="12" viewBox="0 0 12 12"><rect x="1" y="1" width="10" height="10" fill="none" stroke="#d2d2d2" stroke-width="0.9"/><g fill="#a8a8a8"><rect x="2.4" y="2.4" width="1.6" height="1.6"/><rect x="5.6" y="2.4" width="1.6" height="1.6"/><rect x="8.4" y="2.4" width="1.4" height="1.6"/><rect x="4" y="4" width="1.6" height="1.6"/><rect x="7.2" y="4" width="1.4" height="1.6"/><rect x="2.4" y="5.6" width="1.6" height="1.6"/><rect x="5.6" y="5.6" width="1.6" height="1.6"/><rect x="8.4" y="5.6" width="1.4" height="1.6"/><rect x="4" y="7.2" width="1.6" height="1.4"/><rect x="7.2" y="7.2" width="1.4" height="1.4"/><rect x="2.4" y="8.4" width="1.6" height="1.2"/><rect x="5.6" y="8.4" width="1.6" height="1.2"/></g></svg>
<div style="left:983.2px;top:220.7px;width:13.8px;height:13.3px;background:#2a2a2a;border-radius:1.5px;"></div>
<div style="left:1020.6px;top:220.7px;width:13.8px;height:13.3px;background:#2a2a2a;border-radius:1.5px;"></div>
<svg style="left:984px;top:221.4px" width="12" height="12" viewBox="0 0 12 12"><path d="M3.6 1 V11 M1 4 H11 M1 8.2 H11" stroke="#e8e8e8" stroke-width="0.9"/><path d="M5.6 1.8 H10.4 M5.6 6.1 H10.4 M5.6 10.2 H10.4" stroke="#e8e8e8" stroke-width="0.7" stroke-dasharray="1.2 0.6"/></svg>
<svg style="left:1002.7px;top:221.4px" width="12" height="12" viewBox="0 0 12 12"><path d="M3 1 V11 M5.6 1 V7 M1 3.6 H11 M1 6.4 H6.4" stroke="#a4a4a4" stroke-width="0.8"/><rect x="6.6" y="7.6" width="4.4" height="3.4" fill="#c4c4c4"/><path d="M7.6 7.6 V6.4 Q8.8 5 10 6.4 V7.6" fill="none" stroke="#c4c4c4" stroke-width="0.7"/></svg>
<svg style="left:1021.4px;top:221.4px" width="12" height="12" viewBox="0 0 12 12"><path d="M3.4 1 V11 M1 3.4 H11" stroke="#e8e8e8" stroke-width="0.9"/><path d="M1.8 1.8 L5 5 M5 1.8 L1.8 5" stroke="#e8e8e8" stroke-width="0.5"/><path d="M9.4 5 L7 8.4 H8.8 L8 11.2 L10.8 7.4 H9 Z" fill="#e8e8e8"/></svg>
<svg style="left:984px;top:245.5px" width="12" height="12" viewBox="0 0 12 12"><path d="M2.4 0.8 V11.2" stroke="#d2d2d2" stroke-width="0.8"/><path d="M0.8 6 H4" stroke="#d2d2d2" stroke-width="0.7"/><path d="M5.4 4 H8.4 Q10.4 4 10.4 6 Q10.4 8 8.4 8 H5.4" fill="none" stroke="#d2d2d2" stroke-width="1"/></svg>
<svg style="left:1002.7px;top:245.5px" width="12" height="12" viewBox="0 0 12 12"><path d="M1.6 0.8 V11.2 M3 0.8 V11.2 M4.4 0.8 V11.2" stroke="#d2d2d2" stroke-width="0.6" stroke-dasharray="1.3 0.5"/><path d="M1 1 H5" stroke="#d2d2d2" stroke-width="0.7"/><path d="M5.6 4 H8.4 Q10.4 4 10.4 6 Q10.4 8 8.4 8 H5.6" fill="none" stroke="#d2d2d2" stroke-width="1"/></svg>
<svg style="left:1021.4px;top:245.5px" width="12" height="12" viewBox="0 0 12 12"><path d="M2.4 0.8 V11.2" stroke="#d2d2d2" stroke-width="1.8" stroke-dasharray="2.2 1.1"/><path d="M5.4 4 H8.4 Q10.4 4 10.4 6 Q10.4 8 8.4 8 H5.4" fill="none" stroke="#d2d2d2" stroke-width="1"/></svg>
<div style="left:959.3px;top:264.6px;width:112.5px;height:12.1px;background:#4a4a4a;border:0.6px solid #636363;border-radius:1.5px;box-sizing:border-box;"></div>
<div style="left:996.3px;top:301px;width:36.1px;height:11.7px;background:#3a3a3a;"></div>
<div style="left:931.2px;top:321.5px;width:7.4px;height:7.4px;background:transparent;border:0.65px solid #a6a6a6;border-radius:1.2px;box-sizing:border-box;"></div>
<div style="left:931.2px;top:336.6px;width:7.4px;height:7.4px;background:transparent;border:0.65px solid #a6a6a6;border-radius:1.2px;box-sizing:border-box;"></div>
<div style="left:931.2px;top:351.6px;width:7.4px;height:7.4px;background:transparent;border:0.65px solid #a6a6a6;border-radius:1.2px;box-sizing:border-box;"></div>
<div style="left:929.5px;top:394px;width:72.8px;height:12.6px;background:#4a4a4a;border:0.6px solid #636363;border-radius:1.5px;box-sizing:border-box;"></div>
<div style="left:1008.5px;top:394px;width:62.7px;height:12.6px;background:#4a4a4a;border:0.6px solid #636363;border-radius:1.5px;box-sizing:border-box;"></div>
<div style="left:929.5px;top:413.5px;width:141.7px;height:12.9px;background:#4a4a4a;border:0.6px solid #636363;border-radius:1.5px;box-sizing:border-box;"></div>
<div style="left:25.9px;top:671.2px;width:860.6px;height:0.7px;background:#2e2e2e;"></div>
<div style="left:25.9px;top:671.9px;width:860.6px;height:15px;background:#404040;"></div>
<div style="left:25.9px;top:686.9px;width:860.6px;height:10.1px;background:#3a3a3a;"></div>
<div style="left:340.5px;top:686.9px;width:546px;height:10.1px;background:#474747;"></div>
<div style="left:886.5px;top:686.9px;width:9.6px;height:10.1px;background:#3e3e3e;"></div>
<svg style="left:28.8px;top:674.3px" width="9" height="9" viewBox="0 0 9 9"><circle cx="4.5" cy="4.5" r="4.1" fill="#c4c4c4"/><path d="M3.2 3.6 Q3.2 2.2 4.5 2.2 Q5.9 2.2 5.9 3.4 Q5.9 4.2 4.6 4.8 V5.6" fill="none" stroke="#404040" stroke-width="0.9"/><circle cx="4.6" cy="6.8" r="0.55" fill="#404040"/></svg>
<div style="left:28.7px;top:688px;width:31.5px;height:9px;background:#333;"></div>
<svg style="left:61.5px;top:689px" width="8" height="8" viewBox="-4 -4 8 8"><path d="M-1.8 -0.9 L0 0.9 L1.8 -0.9" fill="none" stroke="#ccc" stroke-width="0.8" stroke-linecap="round" stroke-linejoin="round"/></svg>
<div style="left:74.5px;top:688px;width:30.5px;height:9px;background:#333;"></div>
<svg style="left:106.7px;top:689px" width="8" height="8" viewBox="-4 -4 8 8"><path d="M-1.8 -0.9 L0 0.9 L1.8 -0.9" fill="none" stroke="#ccc" stroke-width="0.8" stroke-linecap="round" stroke-linejoin="round"/></svg>
<svg style="left:121px;top:689.5px" width="20" height="7" viewBox="0 0 20 7"><path d="M3 1 V6" stroke="#606060" stroke-width="0.7"/><path d="M6.6 1 V6 L3.6 3.5 Z M16.4 1 V6 L13.4 3.5 Z" fill="#606060"/></svg>
<div style="left:143px;top:688px;width:24.5px;height:9px;background:#333;"></div>
<svg style="left:169px;top:689px" width="8" height="8" viewBox="-4 -4 8 8"><path d="M-1.8 -0.9 L0 0.9 L1.8 -0.9" fill="none" stroke="#ccc" stroke-width="0.8" stroke-linecap="round" stroke-linejoin="round"/></svg>
<svg style="left:182px;top:689.5px" width="20" height="7" viewBox="0 0 20 7"><path d="M3 1 V6 L6 3.5 Z M13.4 1 V6 L16.4 3.5 Z" fill="#606060"/><path d="M17.4 1 V6" stroke="#606060" stroke-width="0.7"/></svg>
<svg style="left:332px;top:689.5px" width="8" height="7" viewBox="0 0 8 7"><path d="M2.4 0.8 V6.2 L5.8 3.5 Z" fill="#d8d8d8"/></svg>
<svg style="left:344px;top:689.5px" width="8" height="7" viewBox="0 0 8 7"><path d="M4.6 1.2 L2.6 3.5 L4.6 5.8" fill="none" stroke="#888" stroke-width="0.7"/></svg>
<svg style="left:877.5px;top:689.5px" width="8" height="7" viewBox="0 0 8 7"><path d="M3.2 1.2 L5.2 3.5 L3.2 5.8" fill="none" stroke="#aaa" stroke-width="0.7"/></svg>
<div style="left:607.5px;top:689px;width:15px;height:6px;background:#626262;border-radius:3px;"></div>
<svg style="left:545px;top:156px" width="20" height="20" viewBox="545 156 20 20"><path d="M550.4 161 L558 168.4 L553.4 169 L550.6 171.8 Z" fill="#140a0e" stroke="#fff" stroke-width="0.5" stroke-linejoin="round" paint-order="stroke"/></svg>
<svg style="left:290px;top:190px" width="335" height="375" viewBox="290 190 335 375"><path d="M358.5 289.8C357.1 288.2 352.7 283.7 349.9 280.2C347.1 276.7 344.1 272.7 341.9 268.7C339.7 264.7 337.6 260.2 336.5 256.0C335.4 251.8 335.3 248.0 335.3 243.7C335.3 239.4 335.8 234.5 336.7 230.2C337.6 225.9 339.1 221.8 341.0 218.0C342.9 214.2 346.0 210.3 348.3 207.7C350.6 205.1 353.9 203.1 355.0 202.2C355.5 202.7 357.5 204.7 358.0 205.2C360.0 204.1 365.1 200.4 370.2 198.8C375.3 197.2 382.6 196.1 388.5 195.9C394.4 195.7 401.3 196.9 405.6 197.6C409.9 198.3 412.6 199.2 414.1 200.0C415.6 200.8 414.7 201.8 414.8 202.2C414.5 202.7 413.8 204.2 412.9 205.2C412.0 206.2 409.9 207.8 409.3 208.3C410.3 209.6 413.6 213.1 415.4 216.2C417.2 219.2 419.2 222.8 420.2 226.6C421.2 230.4 421.2 234.7 421.2 238.8C421.2 243.0 420.9 247.6 420.0 251.5C419.1 255.4 414.3 259.6 416.0 262.4C417.7 265.1 432.7 261.7 430.0 268.0C427.3 274.3 411.9 296.4 400.0 300.0C388.1 303.6 365.4 291.5 358.5 289.8Z" fill="#1d3b40" stroke="#1d3b40" stroke-width="0.9" stroke-linejoin="round"/>
<path d="M369.4 285.9C368.6 285.7 367.4 286.5 364.9 284.8C362.4 283.1 357.6 279.1 354.5 275.6C351.4 272.2 348.7 268.1 346.5 264.1C344.3 260.1 342.1 255.5 341.4 251.5C340.7 247.5 341.9 243.3 342.2 240.0C342.5 236.7 342.6 234.6 343.4 231.5C344.2 228.4 345.8 224.5 347.1 221.7C348.5 218.9 350.2 216.5 351.5 214.6C352.8 212.7 354.1 211.1 354.6 210.4C354.2 211.9 352.6 217.8 352.2 219.3C353.2 217.8 355.0 212.7 358.0 210.1C361.0 207.5 365.7 205.4 370.2 204.0C374.7 202.6 380.2 201.9 384.9 201.6C389.6 201.3 394.4 201.8 398.3 202.2C402.2 202.5 406.4 203.4 408.0 203.7C405.5 204.1 395.3 205.7 392.8 206.1C394.5 206.5 400.4 207.6 403.2 208.3C405.9 209.0 407.7 208.5 409.3 210.1C410.9 211.7 411.9 214.8 412.9 218.0C413.9 221.2 414.9 225.5 415.4 229.0C415.9 232.5 415.9 235.1 415.7 238.8C415.5 242.6 415.2 247.8 414.2 251.5C413.2 255.2 411.7 258.3 409.6 260.7C407.5 263.1 403.5 263.9 401.6 265.8C399.7 267.7 400.8 269.0 398.0 272.0C395.2 275.0 389.8 281.7 385.0 284.0C380.2 286.3 372.0 285.6 369.4 285.9Z" fill="#96563d" stroke="#1d3b40" stroke-width="0.9" stroke-linejoin="round"/>
<path d="M504.4 264.7C503.5 259.8 504.0 255.2 504.7 250.5C505.4 245.8 506.6 240.8 508.7 236.3C510.8 231.8 513.9 227.4 517.4 223.7C520.9 220.0 525.3 216.6 530.0 214.2C534.7 211.8 540.7 210.2 545.7 209.5C550.7 208.8 555.4 209.1 559.9 210.3C564.4 211.5 568.9 214.4 572.6 216.6C576.3 218.8 579.8 221.7 582.0 223.7C584.2 225.7 585.6 227.1 586.0 228.4C586.4 229.7 585.4 230.8 584.4 231.5C583.4 232.2 580.9 232.3 579.7 232.3C578.5 232.3 577.7 231.6 577.3 231.5C578.6 233.9 583.0 241.0 585.2 245.7C587.4 250.4 589.5 255.7 590.7 259.9C591.9 264.1 592.3 267.3 592.3 271.0C592.3 274.7 591.5 279.5 590.7 282.0C589.9 284.5 588.5 285.7 587.5 286.0C586.5 286.3 585.3 284.7 584.4 283.6C583.5 282.6 582.4 280.4 582.0 279.7C581.7 280.6 581.7 282.7 580.4 285.2C579.1 287.7 576.5 292.1 574.1 294.6C571.7 297.1 568.1 298.7 566.0 300.0C563.9 301.3 563.3 302.6 561.5 302.4C559.7 302.2 558.6 300.4 555.0 299.0C551.4 297.6 547.5 297.2 540.0 294.0C532.5 290.8 515.9 284.9 510.0 280.0C504.1 275.1 505.3 269.6 504.4 264.7Z" fill="#1d3b40" stroke="#1d3b40" stroke-width="0.9" stroke-linejoin="round"/>
<path d="M511.0 268.0C508.6 264.3 510.2 256.8 510.7 252.0C511.2 247.2 512.3 243.5 514.2 239.4C516.1 235.3 518.9 230.9 522.0 227.6C525.1 224.3 528.9 221.7 533.1 219.7C537.3 217.7 542.8 216.2 547.3 215.8C551.8 215.4 556.2 216.0 559.9 217.0C563.6 218.0 567.0 220.4 569.4 222.0C571.8 223.6 573.6 225.7 574.5 226.4C573.4 226.2 569.9 225.4 567.8 225.2C565.7 224.9 562.8 224.9 561.8 224.9C563.1 225.6 566.9 227.9 569.4 229.2C571.9 230.5 575.7 232.0 577.0 232.6C577.8 234.8 580.5 241.1 582.0 245.7C583.5 250.2 585.2 255.7 586.0 259.9C586.8 264.1 586.7 267.8 586.7 271.0C586.7 274.2 586.3 277.2 586.0 278.9C585.7 280.6 585.2 280.6 585.0 281.0C584.8 279.9 584.4 276.6 583.6 274.1C582.8 271.6 580.9 267.5 580.4 266.2C580.1 267.5 579.3 271.5 578.9 274.1C578.5 276.7 579.4 279.4 578.2 282.0C577.0 284.6 574.0 287.7 571.5 289.8C569.0 291.9 565.4 293.8 563.0 294.4C560.6 295.0 560.0 294.6 557.0 293.2C554.0 291.8 550.3 289.2 545.0 286.0C539.7 282.8 530.7 277.0 525.0 274.0C519.3 271.0 513.4 271.7 511.0 268.0Z" fill="#96563d" stroke="#1d3b40" stroke-width="0.9" stroke-linejoin="round"/>
<path d="M524.4 269.4C524.0 266.7 526.0 262.9 527.6 259.9C529.2 256.9 531.4 253.7 533.9 251.3C536.4 248.9 540.5 246.9 542.6 245.7C544.7 244.5 545.9 244.4 546.5 244.2C545.1 243.3 539.6 239.5 538.2 238.6C539.7 238.1 543.9 235.8 547.3 235.5C550.7 235.2 555.2 235.8 558.4 237.1C561.5 238.4 564.1 240.9 566.2 243.4C568.3 245.9 570.0 249.0 571.0 252.0C572.0 255.0 572.0 259.9 572.2 261.5C571.6 259.9 570.1 254.8 568.6 252.0C567.1 249.2 565.3 246.9 563.1 245.0C560.9 243.1 557.7 241.4 555.2 240.7C552.7 240.0 549.3 240.7 548.1 240.7C548.8 241.9 551.4 246.9 552.0 248.1C550.6 248.6 546.0 249.7 543.4 251.3C540.8 252.9 538.1 255.1 536.3 257.6C534.4 260.1 533.3 263.1 532.3 266.2C531.2 269.3 531.3 275.5 530.0 276.0C528.7 276.5 524.8 272.1 524.4 269.4Z" fill="#1d3b40" stroke="#1d3b40" stroke-width="0.9" stroke-linejoin="round"/>
<path d="M562.6 272.6C562.4 273.9 562.5 277.6 561.5 280.4C560.5 283.1 558.2 286.8 556.8 289.1C555.4 291.4 554.6 294.1 553.2 294.0C551.8 293.9 547.9 289.7 548.2 288.2C548.5 286.7 553.2 286.8 555.2 285.2C557.2 283.6 558.7 281.0 559.9 278.9C561.1 276.8 562.1 273.7 562.6 272.6Z" fill="#1d3b40" stroke="#1d3b40" stroke-width="0.9" stroke-linejoin="round"/>
<path d="M416.0 262.3C419.6 261.8 425.2 261.3 430.0 261.4C434.8 261.5 440.3 262.1 444.9 262.8C449.5 263.5 454.7 264.9 457.8 265.7C460.9 266.4 462.4 267.0 463.3 267.3C464.2 267.0 466.4 265.9 468.9 265.3C471.4 264.7 473.8 264.1 478.1 263.9C482.4 263.7 490.4 263.8 494.8 263.9C499.2 264.0 500.7 263.9 504.4 264.5C508.1 265.1 513.4 266.4 516.8 267.3C520.1 268.2 522.4 269.1 524.5 270.2C526.6 271.2 527.0 271.9 529.7 273.6C532.4 275.3 537.6 278.4 540.9 280.5C544.2 282.6 547.2 284.5 549.5 286.5C551.8 288.5 553.1 290.7 554.7 292.6C556.3 294.5 557.7 296.3 559.0 298.0C560.3 299.7 560.5 300.2 562.3 302.7C564.1 305.2 567.6 308.7 569.8 312.9C572.0 317.1 573.7 323.1 575.4 327.8C577.1 332.5 578.3 336.2 580.0 340.9C581.7 345.6 583.8 350.9 585.6 355.8C587.4 360.7 588.6 366.0 591.0 370.0C593.4 374.0 597.2 376.5 600.1 380.0C603.0 383.5 605.8 387.4 608.1 391.1C610.4 394.8 612.5 398.6 614.1 402.1C615.7 405.6 616.9 409.2 617.7 412.2C618.5 415.2 618.8 417.7 618.7 420.2C618.6 422.7 617.8 425.5 617.1 427.2C616.4 428.9 615.5 429.9 614.6 430.2C613.7 430.5 612.4 429.9 611.6 429.2C610.8 428.5 610.1 426.7 609.8 426.2C609.9 428.5 610.5 435.2 610.4 440.2C610.3 445.2 610.0 452.3 609.3 456.3C608.6 460.3 607.2 462.7 606.3 464.3C605.3 465.9 604.5 466.0 603.6 466.2C602.8 466.4 602.1 466.6 601.2 465.3C600.3 464.0 598.7 459.5 598.2 458.3C597.2 460.3 594.4 466.0 592.2 470.4C590.0 474.8 587.2 480.9 585.2 484.4C583.2 487.9 581.6 490.3 580.2 491.4C578.8 492.5 577.8 492.0 576.8 491.2C575.8 490.4 574.9 487.2 574.5 486.4C573.4 488.4 570.8 494.8 568.1 498.5C565.4 502.2 560.8 506.5 558.1 508.5C555.4 510.5 553.7 510.7 552.0 510.5C550.3 510.3 548.7 508.0 548.0 507.5C546.7 508.2 542.7 510.1 540.0 511.5C537.3 513.0 534.9 514.6 531.7 516.2C528.5 517.8 522.7 519.3 520.6 520.9C518.5 522.5 520.4 522.5 519.1 525.6C517.8 528.8 515.4 536.1 512.8 539.8C510.2 543.5 506.4 546.1 503.3 547.7C500.2 549.3 497.0 548.2 493.9 549.3C490.8 550.3 488.1 552.4 484.4 554.0C480.7 555.6 476.1 557.9 471.9 558.7C467.7 559.5 462.1 559.2 459.3 558.7C456.5 558.2 455.8 556.9 455.3 555.6C454.8 554.3 456.0 551.6 456.1 550.8C453.0 549.8 443.0 546.9 437.2 544.5C431.4 542.1 425.0 538.9 421.5 536.7C418.0 534.5 416.4 533.1 416.0 531.2C415.6 529.4 418.6 526.5 419.1 525.6C417.7 525.1 413.7 523.5 410.5 522.5C407.3 521.5 403.9 521.4 400.0 519.9C396.1 518.4 390.6 515.6 386.9 513.5C383.2 511.4 379.3 508.1 377.8 507.0C377.7 507.9 378.2 511.5 377.2 512.4C376.2 513.3 374.1 513.6 371.8 512.4C369.5 511.1 366.1 507.5 363.2 504.9C360.3 502.3 355.9 498.1 354.5 496.8C354.2 496.9 354.2 497.7 353.0 497.6C351.8 497.5 349.6 498.0 347.0 496.3C344.4 494.6 340.3 491.6 337.4 487.6C334.5 483.7 331.1 475.1 329.8 472.6C329.4 473.0 328.8 474.7 327.7 474.9C326.6 475.1 325.0 475.8 323.4 473.6C321.8 471.4 320.3 467.4 318.0 461.8C315.7 456.2 311.4 446.8 309.4 440.3C307.4 433.9 306.7 426.0 306.1 423.1C305.9 423.5 306.2 425.1 305.1 425.6C304.0 426.1 301.1 427.4 299.7 426.3C298.3 425.2 297.2 422.9 296.5 418.8C295.8 414.7 295.3 406.6 295.4 401.5C295.5 396.4 295.6 393.0 296.9 387.9C298.1 382.8 300.3 376.1 302.9 370.7C305.5 365.2 308.8 360.4 312.4 355.2C316.0 350.0 320.1 344.6 324.4 339.7C328.7 334.8 334.9 329.4 338.2 326.0C341.5 322.6 341.7 323.2 344.2 319.2C346.7 315.2 351.0 306.9 353.4 302.0C355.8 297.1 357.6 291.8 358.5 289.8C359.4 289.4 361.8 288.3 364.0 287.4C366.2 286.5 369.2 285.9 372.0 284.5C374.8 283.1 379.4 279.9 380.9 279.0C381.8 278.6 384.1 277.5 386.0 276.4C387.9 275.2 391.3 272.8 392.4 272.1C393.7 271.2 397.7 268.0 400.4 266.8C403.1 265.6 405.9 265.4 408.5 264.7C411.1 263.9 412.4 262.9 416.0 262.3Z" fill="#1d3b40" stroke="#1d3b40" stroke-width="0.9" stroke-linejoin="round"/>
<path d="M392.4 272.1C394.3 271.9 400.1 271.5 403.9 271.0C407.7 270.5 411.6 269.7 415.4 269.3C419.2 268.9 421.9 268.5 426.8 268.4C431.7 268.3 439.4 268.3 444.9 268.8C450.4 269.3 456.3 270.9 460.0 271.6C463.7 272.3 465.0 272.2 466.9 272.8C468.8 273.4 470.7 274.6 471.5 275.0C471.3 274.2 470.5 271.0 470.3 270.2C472.9 270.1 480.4 269.3 485.8 269.3C491.2 269.3 497.8 269.3 503.0 270.2C508.2 271.1 512.5 272.9 516.8 274.5C521.1 276.1 524.8 277.7 528.8 279.7C532.8 281.7 537.2 283.9 540.9 286.5C544.6 289.1 549.0 292.2 551.2 295.1C553.4 298.0 552.8 300.6 554.0 303.6C555.2 306.6 556.9 308.9 558.6 312.9C560.3 316.9 562.2 323.1 564.2 327.8C566.2 332.5 568.5 336.2 570.7 340.9C572.9 345.6 575.2 350.9 577.2 355.8C579.2 360.7 580.9 366.0 583.0 370.0C585.1 374.0 587.5 376.6 590.0 380.0C592.5 383.4 595.8 386.9 598.1 390.1C600.5 393.3 602.4 396.3 604.1 399.1C605.8 401.9 607.1 404.6 608.1 407.1C609.1 409.6 609.7 412.1 610.1 414.2C610.5 416.3 610.5 418.8 610.6 419.7C609.9 418.8 607.9 416.6 606.1 414.2C604.4 411.8 602.1 407.6 600.1 405.1C598.1 402.6 595.1 400.1 594.1 399.1C594.4 400.3 595.1 403.4 596.1 406.1C597.1 408.8 598.9 412.2 600.1 415.2C601.3 418.2 602.3 421.1 603.1 424.2C603.9 427.3 604.6 430.3 604.8 434.0C605.0 437.7 604.9 442.9 604.3 446.3C603.7 449.7 601.7 453.0 601.2 454.3C600.5 453.0 598.5 450.0 597.2 446.3C595.9 442.6 594.0 435.4 593.2 432.2C592.4 429.0 592.4 428.0 592.2 427.2C592.5 430.4 594.5 441.1 594.2 446.3C593.9 451.5 592.0 454.0 590.2 458.3C588.4 462.6 585.0 468.9 583.2 472.4C581.4 475.9 579.9 478.2 579.2 479.4C579.0 477.6 578.3 471.9 578.2 468.4C578.1 464.9 578.5 460.0 578.6 458.3C578.2 460.3 577.5 466.4 576.1 470.4C574.7 474.4 572.4 478.7 570.1 482.4C567.8 486.1 564.6 489.5 562.1 492.5C559.6 495.5 556.3 499.2 555.1 500.5C555.1 499.6 555.4 496.9 555.4 495.0C555.4 493.1 555.1 490.3 555.1 489.4C554.2 491.1 552.5 496.8 550.0 499.5C547.5 502.2 543.0 503.9 540.0 505.5C537.0 507.1 534.4 507.9 531.7 509.1C529.0 510.4 529.1 511.2 523.8 513.0C518.5 514.8 509.0 518.2 500.0 520.0C491.0 521.8 480.0 524.0 470.0 524.0C460.0 524.0 450.1 521.7 440.0 520.0C429.9 518.3 416.4 515.1 409.7 513.8C403.0 512.5 402.7 513.2 400.0 512.4C397.3 511.6 396.2 510.8 393.3 509.2C390.4 507.6 385.8 505.2 382.6 502.7C379.4 500.2 375.9 497.0 374.0 494.1C372.1 491.2 371.8 486.9 371.4 485.5C371.4 486.9 371.6 491.3 371.5 494.0C371.4 496.7 370.8 500.3 370.7 501.6C369.4 500.7 365.9 498.6 363.2 496.3C360.5 494.0 357.3 491.2 354.6 487.6C351.9 484.0 348.7 478.8 347.0 474.7C345.3 470.6 344.8 464.9 344.3 462.9C344.5 464.9 345.1 471.2 345.5 475.0C345.9 478.8 346.8 483.8 347.0 485.5C345.8 484.1 342.2 480.5 339.5 476.9C336.8 473.3 333.2 468.7 330.9 464.0C328.6 459.3 326.6 453.5 325.5 448.9C324.4 444.3 324.2 438.5 324.0 436.4C323.9 438.3 323.6 444.5 323.5 448.0C323.4 451.5 323.4 455.9 323.4 457.5C322.5 455.4 319.6 449.3 318.0 444.6C316.4 439.9 314.6 434.9 313.7 429.5C312.8 424.1 312.8 417.7 312.6 412.3C312.4 406.9 312.6 399.7 312.6 397.2C312.1 399.0 310.6 405.1 309.4 408.0C308.1 410.9 305.8 413.3 305.1 414.4C304.8 414.0 303.7 415.9 303.3 412.3C302.9 408.7 302.7 397.8 302.9 392.9C303.1 388.0 303.5 386.5 304.6 383.0C305.8 379.5 307.5 376.1 309.8 372.0C312.1 367.9 315.1 363.5 318.4 358.7C321.7 353.9 325.5 348.4 329.6 343.2C333.8 338.0 339.5 331.6 343.3 327.7C347.1 323.8 350.3 322.4 352.2 320.0C354.1 317.6 353.0 316.9 354.5 313.5C356.0 310.1 359.1 303.5 361.4 299.7C363.7 295.9 366.2 292.8 368.3 290.5C370.4 288.2 372.0 287.6 374.0 285.9C376.0 284.2 379.3 281.1 380.4 280.2C382.4 278.9 390.4 273.5 392.4 272.1Z" fill="#96563d" stroke="#1d3b40" stroke-width="0.9" stroke-linejoin="round"/>
<path d="M376 277.6 L391 266.2 L396.5 270.2 L387 282 L380.5 285 Z" fill="#96563d"/>
<path d="M391.0 225.4C389.8 224.8 386.1 222.1 383.7 221.5C381.2 220.9 379.1 220.9 376.3 221.7C373.5 222.4 369.7 224.2 366.6 226.0C363.6 227.8 360.1 230.6 358.0 232.7C355.9 234.8 354.6 237.2 353.8 238.8C353.0 240.4 353.3 241.8 353.2 242.4C353.8 243.2 356.2 246.5 356.8 247.3C357.8 247.4 361.9 247.8 362.9 247.9C362.8 249.4 361.9 253.7 362.0 257.2C362.1 260.7 362.6 265.1 363.7 268.7C364.8 272.3 367.0 276.5 368.3 279.0C369.6 281.5 370.6 282.5 371.7 283.6C372.8 284.7 373.5 286.0 375.0 285.5C376.5 285.0 379.6 281.5 380.6 280.4C381.6 279.3 381.1 279.1 381.2 278.8C380.7 278.9 379.3 280.3 378.1 279.6C376.9 278.9 375.4 276.8 374.0 274.4C372.6 272.0 370.4 268.4 369.4 265.3C368.3 262.2 367.8 258.9 367.7 256.1C367.6 253.3 368.2 250.7 369.0 248.5C369.8 246.3 372.1 243.9 372.7 243.0C370.4 242.5 361.0 240.5 358.7 240.0C358.9 239.5 358.8 238.6 359.9 237.0C361.0 235.4 363.1 232.2 365.4 230.2C367.7 228.2 371.1 226.0 373.9 224.8C376.7 223.6 379.5 223.1 382.4 223.2C385.2 223.3 389.6 225.0 391.0 225.4Z" fill="#1d3b40" stroke="#1d3b40" stroke-width="0.9" stroke-linejoin="round"/>
<path d="M397.6 244.6C397.5 246.3 397.5 251.3 397.0 254.9C396.5 258.5 395.5 263.5 394.7 266.4C393.9 269.3 392.6 271.3 392.2 272.3C393.6 271.4 399.1 270.1 400.6 267.0C402.1 263.9 401.5 257.5 401.0 253.8C400.5 250.1 398.2 246.1 397.6 244.6Z" fill="#1d3b40" stroke="#1d3b40" stroke-width="0.9" stroke-linejoin="round"/>
<path d="M468.9 277.6C470.1 277.7 473.8 277.4 476.3 278.2C478.8 279.0 481.2 280.5 483.7 282.4C486.2 284.3 489.0 287.4 491.1 289.8C493.2 292.2 495.4 295.6 496.2 296.8C494.7 296.0 490.1 293.6 487.4 291.9C484.7 290.2 482.3 288.5 480.0 286.8C477.7 285.1 475.4 283.2 473.5 281.7C471.6 280.2 469.7 278.3 468.9 277.6Z" fill="#1d3b40" stroke="#1d3b40" stroke-width="0.9" stroke-linejoin="round"/>
<path d="M384.9 432.1C385.1 428.1 387.0 424.2 388.7 420.9C390.4 417.6 392.5 415.0 395.0 412.5C397.5 410.0 399.1 409.3 403.6 406.0C408.1 402.7 416.6 396.1 422.2 392.9C427.8 389.7 431.7 388.6 437.0 387.0C442.3 385.4 449.0 385.1 454.0 383.6C459.0 382.1 461.7 379.4 467.0 378.0C472.3 376.6 479.5 375.2 485.7 375.2C491.9 375.2 498.7 376.3 504.3 378.0C509.9 379.7 514.3 382.3 519.3 385.4C524.3 388.5 529.9 392.2 534.2 396.6C538.6 401.0 542.8 406.3 545.4 411.6C548.0 416.9 549.4 423.7 550.0 428.4C550.6 433.1 549.8 436.5 549.1 439.6C548.4 442.7 547.4 444.9 546.0 447.0C544.6 449.1 542.8 449.2 540.9 452.0C539.0 454.8 536.1 459.3 534.5 463.5C532.9 467.7 532.4 471.9 531.0 477.0C529.6 482.1 527.6 489.0 526.0 494.0C524.4 499.0 523.0 502.8 521.5 507.0C520.0 511.2 519.0 515.2 517.0 519.4C515.0 523.5 512.3 528.2 509.5 531.9C506.7 535.6 503.8 539.3 500.2 541.4C496.6 543.5 491.8 542.9 487.6 544.5C483.4 546.1 478.8 549.6 475.0 550.8C471.2 552.0 466.1 552.5 464.8 551.6C463.5 550.7 469.0 546.8 467.0 545.5C465.0 544.2 458.0 545.0 453.0 543.8C448.0 542.6 441.5 540.2 437.2 538.2C432.9 536.2 428.3 533.5 427.0 531.9C425.7 530.3 430.6 530.4 429.4 528.8C428.2 527.1 422.6 524.9 420.0 522.0C417.4 519.1 415.4 515.9 413.5 511.5C411.6 507.1 410.2 501.3 408.5 495.7C406.8 490.1 405.8 484.1 403.5 478.0C401.2 471.9 397.7 464.5 395.0 459.0C392.3 453.5 389.2 449.5 387.5 445.0C385.8 440.5 384.7 436.1 384.9 432.1Z" fill="#fdebc9"/>
<path d="M396.5 461.0C396.9 462.5 398.2 466.8 399.0 470.0C399.8 473.2 399.9 475.2 401.0 480.0C402.1 484.8 404.2 493.3 405.7 498.9C407.1 504.5 408.3 510.1 409.7 513.8C411.1 517.5 411.9 519.5 414.0 521.0C416.1 522.5 421.8 524.6 422.0 523.0C422.2 521.4 417.1 516.0 415.2 511.5C413.3 506.9 412.1 500.9 410.5 495.7C408.9 490.4 407.1 484.3 405.7 480.0C404.3 475.7 403.5 473.2 402.0 470.0C400.5 466.8 397.4 462.5 396.5 461.0Z" fill="#1d3b40" stroke="#1d3b40" stroke-width="0.9" stroke-linejoin="round"/>
<path d="M540.9 471.3C539.6 472.0 535.1 474.1 533.0 475.5C530.9 476.9 530.0 476.6 528.5 480.0C527.0 483.4 525.4 491.2 523.8 495.7C522.2 500.2 520.7 502.9 519.1 506.8C517.5 510.8 515.7 516.0 514.4 519.4C513.1 522.8 510.7 526.5 511.5 527.0C512.3 527.5 517.2 524.7 519.0 522.5C520.8 520.3 521.4 516.2 522.2 513.8C523.0 511.4 522.8 511.8 523.8 508.3C524.8 504.8 527.0 497.2 528.5 492.6C530.0 488.1 531.2 483.8 532.5 481.0C533.8 478.2 535.1 477.6 536.5 476.0C537.9 474.4 540.2 472.1 540.9 471.3Z" fill="#1d3b40" stroke="#1d3b40" stroke-width="0.9" stroke-linejoin="round"/>
<path d="M538.6 417.6C539.7 418.9 543.5 422.1 545.4 425.6C547.3 429.1 549.1 436.3 549.8 438.4C548.7 437.5 545.2 435.2 543.4 433.0C541.6 430.8 539.6 427.6 538.8 425.0C538.0 422.4 538.6 418.8 538.6 417.6Z" fill="#1d3b40" stroke="#1d3b40" stroke-width="0.9" stroke-linejoin="round"/>
<path d="M528.6 392.5C530.3 393.2 536.2 393.9 538.8 396.6C541.4 399.3 543.5 406.8 544.4 408.8C543.3 408.1 539.9 406.2 538.0 404.5C536.1 402.8 534.6 400.5 533.0 398.5C531.4 396.5 529.3 393.5 528.6 392.5Z" fill="#1d3b40" stroke="#1d3b40" stroke-width="0.9" stroke-linejoin="round"/>
<path d="M391.5 426.5C393.2 425.3 398.4 421.5 402.0 419.5C405.6 417.5 410.4 414.9 412.9 414.4C415.4 413.8 415.7 413.9 416.8 416.2C417.9 418.5 416.9 424.8 419.4 428.4C421.9 432.0 425.8 434.9 431.6 437.7C437.4 440.5 446.9 444.2 454.0 445.1C461.1 446.0 468.6 444.9 474.5 443.3C480.4 441.8 486.6 437.3 489.4 435.8C492.2 434.3 491.1 434.6 491.5 434.4C493.0 435.9 497.2 441.2 500.6 443.3C504.0 445.4 507.8 447.0 511.8 447.0C515.9 447.0 520.9 445.8 524.9 443.3C528.9 440.8 533.8 436.2 536.0 432.1C538.2 428.1 537.6 421.2 537.9 419.0C538.4 419.8 540.2 421.8 541.0 424.0C541.8 426.2 542.6 429.2 542.4 432.0C542.1 434.8 540.8 438.2 539.5 441.0C538.2 443.8 536.5 446.3 534.5 448.5C532.5 450.7 530.0 451.8 527.5 454.0C525.0 456.2 522.7 459.6 519.6 462.0C516.5 464.4 511.4 466.3 508.7 468.2C506.0 470.1 505.0 470.6 503.5 473.4C502.0 476.1 500.5 481.0 499.5 484.7C498.5 488.4 497.4 492.6 497.6 495.7C497.8 498.8 500.0 500.4 500.6 503.0C501.2 505.6 501.1 509.0 501.0 511.5C500.9 514.0 501.6 515.7 500.2 517.8C498.8 519.9 495.4 522.5 492.3 524.1C489.2 525.7 485.2 526.8 481.3 527.2C477.4 527.6 472.9 527.3 468.7 526.4C464.5 525.5 460.0 523.9 456.1 521.7C452.2 519.5 448.2 516.6 445.1 513.1C442.0 509.6 439.5 506.0 437.2 500.5C434.9 495.0 433.1 485.8 431.2 480.0C429.2 474.2 427.2 471.0 425.5 466.0C423.8 461.0 422.3 455.3 420.8 450.0C419.3 444.7 417.7 438.4 416.4 434.0C415.1 429.6 415.1 425.1 413.0 423.5C410.9 421.9 407.6 424.0 404.0 424.5C400.4 425.0 393.6 426.2 391.5 426.5Z" fill="#1d3b40" stroke="#1d3b40" stroke-width="0.9" stroke-linejoin="round"/>
<path d="M436.3 473.2C437.8 471.2 443.8 472.0 447.4 472.4C451.0 472.8 455.1 473.8 457.8 475.8C460.5 477.8 462.3 481.7 463.8 484.4C465.3 487.1 466.7 493.1 467.0 492.0C467.3 490.9 465.8 479.9 465.5 477.5C466.5 477.6 469.5 477.2 471.5 478.4C473.5 479.5 475.9 481.7 477.6 484.4C479.3 487.1 481.0 490.7 481.9 494.7C482.8 498.7 482.5 504.5 482.7 508.5C482.9 512.5 485.2 517.1 482.9 518.6C480.6 520.1 472.9 518.6 468.7 517.8C464.5 517.0 461.1 515.6 457.7 513.8C454.3 512.0 450.8 509.8 448.2 506.8C445.6 503.8 443.6 499.4 441.9 495.7C440.2 492.0 439.1 488.1 438.2 484.4C437.3 480.6 434.8 475.2 436.3 473.2Z" fill="#96563d" stroke="#1d3b40" stroke-width="0.9" stroke-linejoin="round"/>
<path d="M463.6 477.0C464.1 478.5 465.5 482.3 466.5 486.0C467.5 489.7 469.0 496.8 469.5 499.0C468.8 497.4 466.2 493.2 465.2 489.5C464.2 485.8 463.9 479.1 463.6 477.0Z" fill="#1d3b40" stroke="#1d3b40" stroke-width="0.9" stroke-linejoin="round"/>
<path d="M445.1 496.5C444.9 493.7 448.9 495.4 451.0 495.0C453.1 494.6 456.3 493.6 457.7 494.2C459.1 494.8 459.1 496.8 459.3 498.9C459.5 501.0 459.1 504.5 459.0 507.0C458.9 509.5 459.7 513.2 458.5 514.0C457.3 514.8 454.2 514.9 452.0 512.0C449.8 509.1 445.3 499.3 445.1 496.5Z" fill="#1d3b40" stroke="#1d3b40" stroke-width="0.9" stroke-linejoin="round"/>
<path d="M447.5 502.0C448.9 501.4 454.7 498.8 456.1 498.1C456.0 500.4 455.7 509.4 455.6 511.6C454.9 510.9 452.9 509.2 451.5 507.6C450.1 506.0 448.2 502.9 447.5 502.0Z" fill="#fdebc9"/>
<path d="M484.4 500.5C485.1 496.7 487.9 499.1 490.0 498.4C492.1 497.7 495.4 496.1 497.0 496.5C498.6 496.9 499.0 498.8 499.4 500.5C499.8 502.2 499.6 504.8 499.5 507.0C499.4 509.2 499.2 511.8 498.6 514.0C498.0 516.2 498.2 518.8 496.0 520.0C493.8 521.2 487.4 524.2 485.5 521.0C483.6 517.8 483.6 504.3 484.4 500.5Z" fill="#1d3b40" stroke="#1d3b40" stroke-width="0.9" stroke-linejoin="round"/>
<path d="M487.6 502.8C488.8 502.3 493.5 500.2 494.7 499.7C494.6 502.3 494.0 512.8 493.9 515.4C492.9 515.9 488.9 518.1 487.9 518.6C487.8 516.0 487.7 505.4 487.6 502.8Z" fill="#fdebc9"/>
<path d="M442.8 453.5C445.0 453.7 453.6 454.3 455.8 454.5C454.7 455.9 450.4 461.5 449.3 462.9C448.2 461.3 443.9 455.1 442.8 453.5Z" fill="#fdebc9"/>
<path d="M502.5 456.3C504.7 456.1 513.3 455.5 515.5 455.4C514.1 456.8 508.5 462.4 507.1 463.8C506.3 462.6 503.3 457.6 502.5 456.3Z" fill="#fdebc9"/>
<path d="M425.4 505.2C426.0 507.6 427.2 516.3 428.8 519.8C430.4 523.3 432.6 525.0 435.2 526.4C437.8 527.8 442.8 527.7 444.3 528.0C443.2 526.9 440.0 523.7 437.8 521.2C435.6 518.7 433.5 515.9 431.4 513.2C429.3 510.5 426.4 506.5 425.4 505.2Z" fill="#1d3b40" stroke="#1d3b40" stroke-width="0.9" stroke-linejoin="round"/>
<path d="M498.9 531.0C498.8 532.0 498.5 534.9 498.0 537.0C497.5 539.1 495.6 542.7 496.0 543.5C496.4 544.3 499.8 542.9 500.6 541.6C501.4 540.4 500.9 537.8 500.6 536.0C500.3 534.2 499.2 531.8 498.9 531.0Z" fill="#1d3b40" stroke="#1d3b40" stroke-width="0.9" stroke-linejoin="round"/>
<path d="M456.1 550.8C455.9 550.1 460.6 548.7 463.0 547.6C465.4 546.5 469.2 544.8 470.5 544.3C469.9 544.9 468.1 546.7 467.0 548.0C465.9 549.3 465.8 551.5 464.0 552.0C462.2 552.5 456.3 551.5 456.1 550.8Z" fill="#1d3b40" stroke="#1d3b40" stroke-width="0.9" stroke-linejoin="round"/>
<path d="M454.9 384.5C456.9 382.6 461.9 375.8 467.0 373.3C472.1 370.8 480.1 369.8 485.7 369.6C491.3 369.4 496.9 370.8 500.6 372.0C504.3 373.2 506.9 376.2 508.1 377.1C507.5 377.2 508.0 378.3 504.3 378.0C500.6 377.7 491.9 375.2 485.7 375.2C479.5 375.2 472.1 376.4 467.0 378.0C461.9 379.6 456.9 383.4 454.9 384.5Z" fill="#1d3b40" stroke="#1d3b40" stroke-width="0.9" stroke-linejoin="round"/>
<path d="M461.0 402.2C461.0 398.8 461.8 394.0 464.0 391.0C466.2 388.0 469.4 385.6 474.0 384.0C478.6 382.4 485.5 381.6 491.3 381.7C497.1 381.8 504.2 382.9 509.0 384.5C513.8 386.1 517.7 388.4 520.0 391.0C522.3 393.6 523.2 397.1 523.0 400.4C522.8 403.7 521.2 407.6 519.0 411.0C516.8 414.4 513.2 418.1 509.5 420.5C505.8 422.9 500.9 424.6 497.0 425.4C493.1 426.2 490.0 426.2 486.0 425.4C482.0 424.6 476.7 422.8 473.0 420.5C469.3 418.2 466.0 414.6 464.0 411.5C462.0 408.4 461.0 405.6 461.0 402.2Z" fill="#1d3b40" stroke="#1d3b40" stroke-width="0.9" stroke-linejoin="round"/>
<path d="M469.8 398.5C471.2 397.5 474.4 393.9 478.0 392.5C481.6 391.1 486.8 390.1 491.3 390.1C495.8 390.1 501.1 391.0 505.0 392.5C508.9 394.0 513.0 397.8 514.6 398.9C513.0 398.5 508.9 397.1 505.0 396.6C501.1 396.1 495.8 395.7 491.3 395.7C486.8 395.7 481.6 396.3 478.0 396.8C474.4 397.3 471.2 398.2 469.8 398.5Z" fill="#fdebc9"/>
<path d="M422.5 398.3C423.2 397.2 424.4 393.9 426.5 392.0C428.6 390.1 431.8 388.2 435.0 387.0C438.2 385.8 443.5 385.0 446.0 384.6C448.5 384.2 449.3 384.5 450.0 384.5C448.6 385.1 444.5 386.8 441.5 388.0C438.5 389.2 435.2 390.3 432.0 392.0C428.8 393.7 424.1 397.2 422.5 398.3Z" fill="#1d3b40" stroke="#1d3b40" stroke-width="0.9" stroke-linejoin="round"/>
<ellipse cx="443.3" cy="412.5" rx="3.6" ry="3" transform="rotate(35 443.3 412.5)" fill="#1d3b40"/>
<ellipse cx="440" cy="424.6" rx="3.6" ry="2.8" transform="rotate(25 440 424.6)" fill="#1d3b40"/>
<ellipse cx="455.4" cy="422.4" rx="3.8" ry="2.9" transform="rotate(30 455.4 422.4)" fill="#1d3b40"/>
<ellipse cx="527.3" cy="415.3" rx="2.6" ry="3.2" transform="rotate(20 527.3 415.3)" fill="#1d3b40"/>
<ellipse cx="512.2" cy="428.4" rx="4.2" ry="2.9" transform="rotate(-25 512.2 428.4)" fill="#1d3b40"/>
<ellipse cx="522.6" cy="431.7" rx="3.2" ry="2.6" transform="rotate(-25 522.6 431.7)" fill="#1d3b40"/>
<path d="M372.5 331.4C373.0 329.9 373.6 324.9 375.6 322.2C377.7 319.5 383.3 316.4 384.8 315.2C383.9 316.8 381.7 321.8 379.6 324.5C377.6 327.2 373.7 330.2 372.5 331.4Z" fill="#1d3b40" stroke="#1d3b40" stroke-width="0.9" stroke-linejoin="round"/>
<path d="M380.6 326.8C381.9 325.1 385.5 319.4 388.6 316.7C391.7 314.0 397.6 311.5 399.4 310.5C397.9 312.1 393.7 317.3 390.6 320.0C387.5 322.7 382.3 325.7 380.6 326.8Z" fill="#1d3b40" stroke="#1d3b40" stroke-width="0.9" stroke-linejoin="round"/>
<path d="M385.6 333.7C387.5 332.0 392.9 326.1 397.1 323.4C401.3 320.7 406.7 318.9 410.9 317.6C415.1 316.4 419.5 315.8 422.4 315.9C425.3 316.0 427.2 317.1 428.1 318.2C429.0 319.2 428.8 321.1 427.5 322.2C426.2 323.2 423.2 323.7 420.1 324.5C417.0 325.3 412.6 325.6 408.6 326.8C404.6 328.1 399.4 330.7 396.0 332.0C392.6 333.3 389.6 334.5 387.9 334.8C386.2 335.1 386.0 333.9 385.6 333.7Z" fill="#1d3b40" stroke="#1d3b40" stroke-width="0.9" stroke-linejoin="round"/>
<path d="M408.6 332.5C409.8 331.6 412.6 328.6 415.5 327.4C418.4 326.2 422.4 325.3 425.8 325.4C429.2 325.5 432.9 326.5 436.1 327.9C439.4 329.3 442.2 331.6 445.3 333.7C448.4 335.8 451.4 338.8 454.5 340.6C457.6 342.4 460.6 343.9 463.7 344.6C466.8 345.3 470.0 345.0 472.8 344.6C475.6 344.2 479.1 342.7 480.3 342.3C480.0 343.4 479.9 346.8 478.6 348.6C477.4 350.4 474.9 352.2 472.8 353.2C470.7 354.2 468.7 354.8 466.0 354.6C463.3 354.4 459.9 353.2 456.8 352.0C453.7 350.8 450.3 348.8 447.6 347.4C444.9 346.0 441.9 344.1 440.7 343.4C440.7 344.6 440.8 349.1 440.7 350.9C440.6 352.7 440.2 353.7 440.1 354.3C438.6 354.9 432.8 357.2 431.3 357.8C432.8 358.3 438.6 360.1 440.1 360.6C439.9 361.7 439.9 365.0 439.0 367.0C438.1 369.0 436.5 371.4 435.0 372.7C433.5 374.0 431.4 375.2 429.8 375.0C428.2 374.8 426.4 373.2 425.2 371.5C424.0 369.8 423.2 367.8 422.9 364.7C422.6 361.6 423.0 356.8 423.5 353.2C424.0 349.6 425.1 345.8 425.8 342.9C426.5 340.0 427.5 337.1 427.9 336.0C426.6 335.7 423.3 334.9 420.1 334.3C416.9 333.7 410.5 332.8 408.6 332.5Z" fill="#1d3b40" stroke="#1d3b40" stroke-width="0.9" stroke-linejoin="round"/>
<path d="M369.6 361.2C370.6 360.8 372.2 358.5 375.3 358.9C378.4 359.3 384.3 361.6 387.9 363.5C391.5 365.4 395.2 368.7 397.1 370.4C399.0 372.1 399.0 373.2 399.4 373.8C398.1 373.4 394.8 372.8 391.4 371.5C388.0 370.2 382.4 367.5 378.8 365.8C375.2 364.1 371.1 362.0 369.6 361.2Z" fill="#1d3b40" stroke="#1d3b40" stroke-width="0.9" stroke-linejoin="round"/>
<path d="M382.8 356.6C383.9 356.3 386.0 354.1 389.1 354.9C392.2 355.7 397.7 358.4 401.7 361.2C405.7 364.0 410.4 368.5 413.2 371.5C416.0 374.5 417.4 377.8 418.3 379.0C417.1 378.5 414.0 378.0 410.9 376.1C407.8 374.2 403.2 370.0 399.4 367.5C395.6 365.0 390.7 363.0 387.9 361.2C385.1 359.4 383.6 357.4 382.8 356.6Z" fill="#1d3b40" stroke="#1d3b40" stroke-width="0.9" stroke-linejoin="round"/>
<path d="M369.2 421.3C369.7 420.0 370.3 415.6 372.0 413.5C373.7 411.4 378.2 409.2 379.5 408.4C378.8 409.6 377.2 413.4 375.5 415.5C373.8 417.6 370.2 420.3 369.2 421.3Z" fill="#1d3b40" stroke="#1d3b40" stroke-width="0.9" stroke-linejoin="round"/>
<path d="M377.8 423.9C378.8 422.2 380.9 416.4 384.0 413.5C387.1 410.6 394.6 407.8 396.7 406.7C395.3 408.2 391.6 412.6 388.5 415.5C385.4 418.4 379.6 422.5 377.8 423.9Z" fill="#1d3b40" stroke="#1d3b40" stroke-width="0.9" stroke-linejoin="round"/>
<path d="M502.8 333.9C502.4 335.3 501.5 339.7 500.5 342.5C499.5 345.3 497.5 348.6 497.0 350.6C496.5 352.6 496.9 353.7 497.6 354.6C498.3 355.6 499.4 356.5 501.1 356.3C502.8 356.1 505.8 354.4 507.9 353.4C510.0 352.3 512.7 350.6 513.7 350.0C514.0 351.8 514.7 357.4 515.4 360.9C516.1 364.4 516.7 368.7 517.7 371.2C518.8 373.7 520.3 375.2 521.7 375.8C523.1 376.4 525.0 375.9 526.3 374.7C527.5 373.5 528.5 370.9 529.2 368.9C529.9 366.9 530.2 363.8 530.4 362.8C528.4 362.4 520.6 360.7 518.6 360.3C520.2 359.6 526.8 357.0 528.4 356.4C528.4 355.8 529.0 354.4 528.6 352.9C528.2 351.3 527.2 348.7 526.3 347.1C525.4 345.5 523.9 343.8 523.4 343.1C524.6 342.4 528.5 340.4 530.9 339.1C533.3 337.9 536.6 336.2 537.8 335.6C538.9 336.2 542.4 337.8 544.7 339.1C547.0 340.5 549.5 342.5 551.5 343.7C553.5 344.9 555.8 346.0 556.7 346.5C556.2 345.1 555.0 340.5 553.8 337.9C552.5 335.3 551.1 333.1 549.2 331.1C547.3 329.1 544.5 326.9 542.4 325.9C540.3 324.8 538.5 324.6 536.6 324.8C534.7 325.0 533.2 325.6 530.9 327.0C528.6 328.4 525.8 331.3 522.9 333.4C520.0 335.5 516.5 337.7 513.7 339.7C510.9 341.7 507.4 344.4 506.2 345.4C506.1 344.5 506.3 342.1 505.7 340.2C505.1 338.3 503.3 334.9 502.8 333.9Z" fill="#1d3b40" stroke="#1d3b40" stroke-width="0.9" stroke-linejoin="round"/>
<path d="M528.6 384.4C529.9 383.8 533.4 381.8 536.6 381.0C539.9 380.2 544.7 379.6 548.1 379.5C551.5 379.4 555.0 379.7 557.3 380.4C559.6 381.1 561.1 383.2 561.9 383.8C560.5 383.9 557.0 384.3 553.8 384.4C550.5 384.5 546.6 384.6 542.4 384.6C538.2 384.6 530.9 384.4 528.6 384.4Z" fill="#1d3b40" stroke="#1d3b40" stroke-width="0.9" stroke-linejoin="round"/>
<path d="M540.1 389.6C541.2 389.1 544.2 387.1 546.9 386.7C549.6 386.3 553.0 386.5 556.1 387.3C559.2 388.1 562.8 389.8 565.3 391.3C567.8 392.8 570.0 395.6 571.0 396.5C569.1 395.9 563.2 394.1 559.6 393.0C556.0 391.9 552.5 390.2 549.2 389.6C546.0 389.0 541.6 389.6 540.1 389.6Z" fill="#1d3b40" stroke="#1d3b40" stroke-width="0.9" stroke-linejoin="round"/></svg>
<span id="m1" style="left:33.5px;top:12.05px;font-size:8.8px;font-weight:700;color:#fff;letter-spacing:-0.025px;">Illustrator (Beta)</span>
<span id="m2" style="left:114px;top:12.05px;font-size:8.8px;font-weight:400;color:#fff;letter-spacing:-0.422px;">File</span>
<span id="m3" style="left:140px;top:12.05px;font-size:8.8px;font-weight:400;color:#fff;letter-spacing:-0.293px;">Edit</span>
<span id="m4" style="left:167.5px;top:12.05px;font-size:8.8px;font-weight:400;color:#fff;letter-spacing:0.010px;">Object</span>
<span id="m5" style="left:206px;top:12.05px;font-size:8.8px;font-weight:400;color:#fff;letter-spacing:-0.395px;">Type</span>
<span id="m6" style="left:237px;top:12.05px;font-size:8.8px;font-weight:400;color:#fff;letter-spacing:-0.159px;">Select</span>
<span id="m7" style="left:273.5px;top:12.05px;font-size:8.8px;font-weight:400;color:#fff;letter-spacing:0.109px;">Effect</span>
<span id="m8" style="left:309px;top:12.05px;font-size:8.8px;font-weight:400;color:#fff;letter-spacing:-0.230px;">View</span>
<span id="m9" style="left:340px;top:12.05px;font-size:8.8px;font-weight:400;color:#fff;letter-spacing:-0.216px;">Window</span>
<span id="m10" style="left:383.5px;top:12.05px;font-size:8.8px;font-weight:400;color:#fff;letter-spacing:-0.273px;">Help</span>
<span id="m11" style="left:986.2px;top:12.05px;font-size:8.8px;font-weight:400;color:#fff;letter-spacing:-0.167px;">Tue Aug 19</span>
<span id="m12" style="left:1034px;top:12.05px;font-size:8.8px;font-weight:400;color:#fff;letter-spacing:-0.189px;">11:29 AM</span>
<span id="t1" style="left:460px;top:35.55px;font-size:8.2px;font-weight:400;color:#d0d0d0;letter-spacing:0.028px;">Adobe Illustrator 2025 (Beta)</span>
<span id="t2" style="left:960.8px;top:35.05px;font-size:7.7px;font-weight:700;color:#fff;letter-spacing:-0.355px;">Share</span>
<span id="c1" style="left:9.5px;top:56.349999999999994px;font-size:7.2px;font-weight:400;color:#d2d2d2;letter-spacing:-0.272px;">No Selection</span>
<span id="c2" style="left:129.3px;top:56.55px;font-size:7.2px;font-weight:400;color:#d2d2d2;letter-spacing:-0.226px;border-bottom:0.6px dotted #bbb;line-height:8px;">Stroke:</span>
<span id="c3" style="left:299.2px;top:56.55px;font-size:7.2px;font-weight:400;color:#222;letter-spacing:-0.234px;">5 pt. Round</span>
<span id="c4" style="left:353.8px;top:56.55px;font-size:7.2px;font-weight:400;color:#d2d2d2;letter-spacing:-0.234px;border-bottom:0.6px dotted #bbb;line-height:8px;">Opacity:</span>
<span id="c5" style="left:384.7px;top:56.55px;font-size:7.2px;font-weight:400;color:#ececec;letter-spacing:-0.598px;">100%</span>
<span id="c6" style="left:433.8px;top:56.55px;font-size:7.2px;font-weight:400;color:#d2d2d2;letter-spacing:-0.297px;">Style:</span>
<span id="c7" style="left:491px;top:56.55px;font-size:7.2px;font-weight:400;color:#ececec;letter-spacing:-0.218px;">Document Setup</span>
<span id="c8" style="left:556.5px;top:56.55px;font-size:7.2px;font-weight:400;color:#ececec;letter-spacing:-0.324px;">Preferences</span>
<span id="d1" style="left:41.3px;top:76.14999999999999px;font-size:7.2px;font-weight:700;color:#e8e8e8;letter-spacing:-0.233px;">Turntable.ai* @ 74.06 % (RGB/Preview)</span>
<span id="d2" style="left:188.7px;top:76.14999999999999px;font-size:7.2px;font-weight:400;color:#a8a8a8;letter-spacing:-0.126px;">AdobeStock_597803794.ai @ 21.23 % (RGB/Preview)</span>
<span id="f1" style="left:90.8px;top:138.35000000000002px;font-size:7.2px;font-weight:700;color:#e8e8e8;letter-spacing:-0.403px;">Beta Feedback</span>
<span id="p1" style="left:928.9px;top:82.55px;font-size:7.2px;font-weight:700;color:#f0f0f0;letter-spacing:-0.296px;">Properties</span>
<span id="p2" style="left:972.7px;top:82.55px;font-size:7.2px;font-weight:400;color:#b0b0b0;letter-spacing:-0.213px;">Layers</span>
<span id="p3" style="left:1005px;top:82.55px;font-size:7.2px;font-weight:400;color:#b0b0b0;letter-spacing:0.091px;">Libraries</span>
<span id="p4" style="left:929.4px;top:102.14999999999999px;font-size:7.2px;font-weight:400;color:#d2d2d2;letter-spacing:-0.264px;">No Selection</span>
<span id="p5" style="left:929.4px;top:123.95px;font-size:7.2px;font-weight:400;color:#d2d2d2;letter-spacing:-0.246px;">Document</span>
<span id="p6" style="left:955px;top:141.15px;font-size:7.2px;font-weight:400;color:#d2d2d2;letter-spacing:-0.113px;">Units:</span>
<span id="p7" style="left:980.7px;top:141.15px;font-size:7.2px;font-weight:400;color:#ececec;letter-spacing:-0.331px;">Pixels</span>
<span id="p8" style="left:944.2px;top:159.05px;font-size:7.2px;font-weight:400;color:#d2d2d2;letter-spacing:-0.120px;">Artboard:</span>
<span id="p9" style="left:979.2px;top:158.15px;font-size:7.2px;font-weight:400;color:#ececec;">1</span>
<span id="p10" style="left:990.5px;top:177.15px;font-size:7.2px;font-weight:400;color:#f0f0f0;letter-spacing:-0.133px;">Edit Artboards</span>
<span id="p11" style="left:929.4px;top:204.55px;font-size:7.2px;font-weight:400;color:#d2d2d2;letter-spacing:-0.272px;">Ruler &amp; Grids</span>
<span id="p12" style="left:929.4px;top:228.05px;font-size:7.2px;font-weight:400;color:#d2d2d2;letter-spacing:-0.347px;">Guides</span>
<span id="p13" style="left:929.4px;top:252.05px;font-size:7.2px;font-weight:400;color:#d2d2d2;letter-spacing:-0.280px;">Snap Options</span>
<span id="p14" style="left:973.7px;top:271.25px;font-size:7.2px;font-weight:400;color:#f0f0f0;letter-spacing:-0.263px;">Smart Guides Preferences...</span>
<span id="p15" style="left:929.4px;top:291.95px;font-size:7.2px;font-weight:400;color:#d2d2d2;letter-spacing:-0.379px;">Preferences</span>
<span id="p16" style="left:929.4px;top:308.55px;font-size:7.2px;font-weight:400;color:#d2d2d2;letter-spacing:-0.218px;">Keyboard Increment:</span>
<span id="p17" style="left:999px;top:307.15000000000003px;font-size:7.2px;font-weight:400;color:#ececec;letter-spacing:-0.073px;">1 px</span>
<span id="p18" style="left:940.7px;top:325.75px;font-size:7.2px;font-weight:400;color:#d2d2d2;letter-spacing:-0.412px;">Use Preview Bounds</span>
<span id="p19" style="left:940.7px;top:340.85px;font-size:7.2px;font-weight:400;color:#d2d2d2;letter-spacing:-0.404px;">Scale Corners</span>
<span id="p20" style="left:940.7px;top:355.85px;font-size:7.2px;font-weight:400;color:#d2d2d2;letter-spacing:-0.334px;">Scale Strokes &amp; Effects</span>
<span id="p21" style="left:929.4px;top:383.85px;font-size:7.2px;font-weight:400;color:#d2d2d2;letter-spacing:-0.157px;">Quick Actions</span>
<span id="p22" style="left:940.5px;top:400.85px;font-size:7.2px;font-weight:400;color:#f0f0f0;letter-spacing:-0.218px;">Document Setup</span>
<span id="p23" style="left:1022px;top:400.85px;font-size:7.2px;font-weight:400;color:#f0f0f0;letter-spacing:-0.315px;">Preferences</span>
<span id="p24" style="left:974.2px;top:420.55px;font-size:7.2px;font-weight:400;color:#f0f0f0;letter-spacing:-0.227px;">Generate Vectors</span>
<span id="h1" style="left:45px;top:679.3499999999999px;font-size:7.2px;font-weight:700;color:#ddd;letter-spacing:-0.398px;">Click</span>
<span id="h2" style="left:62.5px;top:679.3499999999999px;font-size:7.2px;font-weight:400;color:#b4b4b4;letter-spacing:-0.097px;">the object to select</span>
<span id="h3" style="left:124.5px;top:679.3499999999999px;font-size:7.2px;font-weight:400;color:#b4b4b4;">|</span>
<span id="h4" style="left:131px;top:679.3499999999999px;font-size:7.2px;font-weight:700;color:#ddd;letter-spacing:-0.169px;">Shift+Click</span>
<span id="h5" style="left:168.5px;top:679.3499999999999px;font-size:7.2px;font-weight:400;color:#b4b4b4;letter-spacing:-0.069px;">to select multiple object</span>
<span id="h6" style="left:246px;top:679.3499999999999px;font-size:7.2px;font-weight:400;color:#b4b4b4;">|</span>
<span id="h7" style="left:252.5px;top:679.3499999999999px;font-size:7.2px;font-weight:700;color:#ddd;letter-spacing:-0.158px;">Option+Drag</span>
<span id="h8" style="left:296.5px;top:679.3499999999999px;font-size:7.2px;font-weight:400;color:#b4b4b4;letter-spacing:-0.062px;">the object to duplicate</span>
<span id="b1" style="left:30.5px;top:693.55px;font-size:7.2px;font-weight:400;color:#ececec;letter-spacing:-0.398px;">74.06%</span>
<span id="b2" style="left:76.5px;top:693.55px;font-size:7.2px;font-weight:400;color:#ececec;">0°</span>
<span id="b3" style="left:145.5px;top:693.55px;font-size:7.2px;font-weight:400;color:#ececec;">1</span>
<span id="b4" style="left:254px;top:693.55px;font-size:7.2px;font-weight:400;color:#d2d2d2;letter-spacing:-0.231px;">Selection</span>
</div></body></html>
